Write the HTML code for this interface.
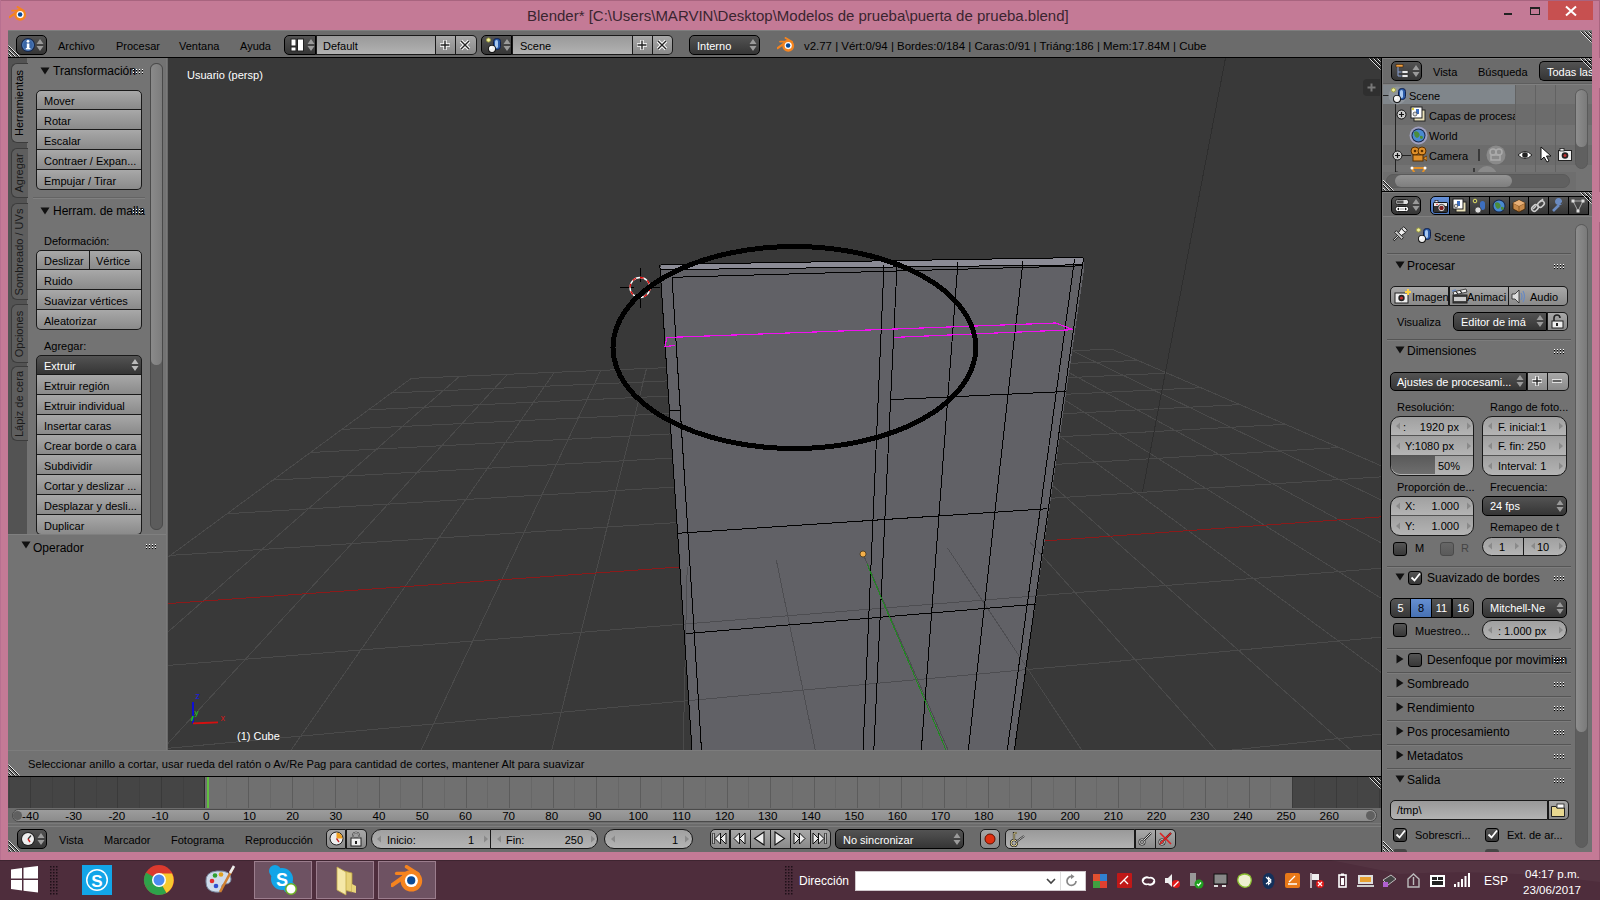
<!DOCTYPE html><html><head><meta charset="utf-8"><style>
html,body{margin:0;padding:0}body{width:1600px;height:900px;overflow:hidden;position:relative;background:#c47a96;font-family:"Liberation Sans",sans-serif}
.a{position:absolute;box-sizing:border-box}.t{white-space:nowrap}
</style></head><body>
<div class="a" style="left:0px;top:0px;width:1600px;height:1px;background:#a8647f"></div>
<div class="a" style="left:1599px;top:0px;width:1px;height:900px;background:#a8647f"></div>
<div class="a" style="left:0px;top:0px;width:1px;height:860px;background:#b87090"></div>
<div class="a t" style="left:527px;top:8.35px;font-size:15px;line-height:15px;color:#3a2530;">Blender* [C:\Users\MARVIN\Desktop\Modelos de prueba\puerta de prueba.blend]</div>
<div class="a" style="left:1548px;top:1px;width:45px;height:19px;background:#c75050"></div>
<svg class="a" style="left:1564px;top:5px;" width="14" height="12" viewBox="0 0 14 12"><path d="M2 1.5L12 10.5M12 1.5L2 10.5" stroke="#fff" stroke-width="2"/></svg>
<div class="a" style="left:1530px;top:7px;width:10px;height:8px;border:1px solid #222;border-top-width:2px"></div>
<div class="a" style="left:1504px;top:13px;width:8px;height:2px;background:#222"></div>
<div class="a" style="left:8px;top:30px;width:1584px;height:822px;background:#727272"></div>
<div class="a" style="left:8px;top:30px;width:1584px;height:27px;background:#6b6b6b"></div>
<div class="a" style="left:8px;top:30px;width:1584px;height:1px;background:#7e7e7e"></div>
<div class="a" style="left:8px;top:57px;width:1584px;height:1px;background:#000"></div>
<div class="a" style="left:16px;top:35px;width:31px;height:20px;border:1px solid #000000;border-radius:5px;background:linear-gradient(#535353,#353535);"></div>
<svg class="a" style="left:20px;top:37px;" width="16" height="16" viewBox="0 0 16 16"><circle cx="8" cy="8" r="7" fill="#16264a"/><circle cx="8" cy="8" r="6" fill="#4c79b6"/><circle cx="8" cy="8" r="4.8" fill="#3a66a6"/><rect x="6.8" y="6.5" width="2.6" height="5.5" fill="#fff"/><rect x="5.8" y="11" width="4.6" height="1.4" fill="#fff"/><circle cx="8" cy="4.3" r="1.4" fill="#fff"/></svg>
<svg class="a" style="left:36px;top:38px;" width="8" height="14" viewBox="0 0 8 14"><path d="M0.5 6L4 1L7.5 6Z M0.5 8L4 13L7.5 8Z" fill="#9a9a9a"/></svg>
<div class="a t" style="left:58px;top:41.35px;font-size:11px;line-height:11px;color:#000;">Archivo</div>
<div class="a t" style="left:116px;top:41.35px;font-size:11px;line-height:11px;color:#000;">Procesar</div>
<div class="a t" style="left:179px;top:41.35px;font-size:11px;line-height:11px;color:#000;">Ventana</div>
<div class="a t" style="left:240px;top:41.35px;font-size:11px;line-height:11px;color:#000;">Ayuda</div>
<div class="a" style="left:284px;top:35px;width:32px;height:20px;border:1px solid #000000;border-radius:5px 0 0 5px;background:linear-gradient(#535353,#353535)"></div>
<div class="a" style="left:316px;top:35px;width:120px;height:20px;border:1px solid #191919;border-left:none;border-radius:0;background:linear-gradient(#999999,#b2b2b2)"></div>
<div class="a" style="left:316px;top:35px;width:1px;height:20px;background:#191919"></div>
<div class="a" style="left:435px;top:35px;width:21px;height:20px;border:1px solid #191919;border-left:none;border-radius:0;background:linear-gradient(#a8a8a8,#8a8a8a)"></div>
<div class="a" style="left:435px;top:35px;width:1px;height:20px;background:#191919"></div>
<div class="a" style="left:455px;top:35px;width:22px;height:20px;border:1px solid #191919;border-left:none;border-radius:0 5px 5px 0;background:linear-gradient(#a8a8a8,#8a8a8a)"></div>
<div class="a" style="left:455px;top:35px;width:1px;height:20px;background:#191919"></div>
<svg class="a" style="left:290px;top:38px;" width="16" height="14" viewBox="0 0 16 14"><rect x="1" y="1" width="5" height="7" fill="#fff" stroke="#222" stroke-width="1"/><rect x="1" y="9" width="5" height="4" fill="#fff" stroke="#222"/><rect x="7.5" y="1" width="6" height="12" fill="#fff" stroke="#222"/></svg>
<svg class="a" style="left:307px;top:38px;" width="8" height="14" viewBox="0 0 8 14"><path d="M0.5 6L4 1L7.5 6Z M0.5 8L4 13L7.5 8Z" fill="#9a9a9a"/></svg>
<div class="a t" style="left:323px;top:41.35px;font-size:11px;line-height:11px;color:#000;">Default</div>
<svg class="a" style="left:438px;top:38px;" width="14" height="14" viewBox="0 0 14 14"><path d="M7 2V12M2 7H12" stroke="#fff" stroke-width="3.4"/><path d="M7 2.5V11.5M2.5 7H11.5" stroke="#222" stroke-width="1.4"/></svg>
<svg class="a" style="left:458px;top:38px;" width="14" height="14" viewBox="0 0 14 14"><path d="M3 3L11 11M11 3L3 11" stroke="#fff" stroke-width="3.4"/><path d="M3 3L11 11M11 3L3 11" stroke="#222" stroke-width="1.4"/></svg>
<div class="a" style="left:481px;top:35px;width:31px;height:20px;border:1px solid #000000;border-radius:5px 0 0 5px;background:linear-gradient(#535353,#353535)"></div>
<div class="a" style="left:512px;top:35px;width:121px;height:20px;border:1px solid #191919;border-left:none;border-radius:0;background:linear-gradient(#999999,#b2b2b2)"></div>
<div class="a" style="left:512px;top:35px;width:1px;height:20px;background:#191919"></div>
<div class="a" style="left:632px;top:35px;width:21px;height:20px;border:1px solid #191919;border-left:none;border-radius:0;background:linear-gradient(#a8a8a8,#8a8a8a)"></div>
<div class="a" style="left:632px;top:35px;width:1px;height:20px;background:#191919"></div>
<div class="a" style="left:652px;top:35px;width:21px;height:20px;border:1px solid #191919;border-left:none;border-radius:0 5px 5px 0;background:linear-gradient(#a8a8a8,#8a8a8a)"></div>
<div class="a" style="left:652px;top:35px;width:1px;height:20px;background:#191919"></div>
<svg class="a" style="left:485px;top:37px;" width="18" height="17" viewBox="0 0 18 17"><circle cx="3.5" cy="3" r="2" fill="#f0f0a0" stroke="#a0a040" stroke-width="1"/><rect x="8.5" y="1.5" width="7" height="11" rx="3" fill="#2a5aa8" stroke="#10204a" stroke-width="1"/><rect x="10" y="3" width="3" height="8" rx="1.5" fill="#a8c8f0"/><circle cx="7" cy="12" r="4" fill="#151515"/><circle cx="7" cy="11.8" r="3.1" fill="#f0f0f0"/><circle cx="6" cy="10.8" r="1.2" fill="#fff"/></svg>
<svg class="a" style="left:503px;top:38px;" width="8" height="14" viewBox="0 0 8 14"><path d="M0.5 6L4 1L7.5 6Z M0.5 8L4 13L7.5 8Z" fill="#9a9a9a"/></svg>
<div class="a t" style="left:520px;top:41.35px;font-size:11px;line-height:11px;color:#000;">Scene</div>
<svg class="a" style="left:635px;top:38px;" width="14" height="14" viewBox="0 0 14 14"><path d="M7 2V12M2 7H12" stroke="#fff" stroke-width="3.4"/><path d="M7 2.5V11.5M2.5 7H11.5" stroke="#222" stroke-width="1.4"/></svg>
<svg class="a" style="left:655px;top:38px;" width="14" height="14" viewBox="0 0 14 14"><path d="M3 3L11 11M11 3L3 11" stroke="#fff" stroke-width="3.4"/><path d="M3 3L11 11M11 3L3 11" stroke="#222" stroke-width="1.4"/></svg>
<div class="a" style="left:689px;top:35px;width:71px;height:20px;border:1px solid #000000;border-radius:5px;background:linear-gradient(#535353,#353535);"></div>
<div class="a t" style="left:697px;top:41.35px;font-size:11px;line-height:11px;color:#fff;">Interno</div>
<svg class="a" style="left:749px;top:38px;" width="8" height="14" viewBox="0 0 8 14"><path d="M0.5 6L4 1L7.5 6Z M0.5 8L4 13L7.5 8Z" fill="#9a9a9a"/></svg>
<svg class="a" style="left:777px;top:37px;" width="19" height="16" viewBox="0 0 19 16"><g transform="scale(0.55) translate(-6,-3)"><path d="M21.6 4.8L33 12" stroke="#f5841f" stroke-width="3.6" stroke-linecap="round"/><path d="M11.6 11.4H24" stroke="#f5841f" stroke-width="3.4" stroke-linecap="round"/><path d="M7.2 23.2L18 15.5" stroke="#f5841f" stroke-width="4" stroke-linecap="round"/><circle cx="26.4" cy="18.8" r="10.8" fill="#f5841f"/><circle cx="26.4" cy="18.6" r="6.5" fill="#fff"/><circle cx="26.2" cy="18.4" r="4.1" fill="#0a4a96"/></g></svg>
<div class="a t" style="left:804px;top:40.97px;font-size:11.45px;line-height:11.45px;color:#000;">v2.77 | Vért:0/94 | Bordes:0/184 | Caras:0/91 | Triáng:186 | Mem:17.84M | Cube</div>
<svg class="a" style="left:9px;top:6px;" width="19" height="16" viewBox="0 0 19 16"><g transform="scale(0.55) translate(-6,-3)"><path d="M21.6 4.8L33 12" stroke="#f5841f" stroke-width="3.6" stroke-linecap="round"/><path d="M11.6 11.4H24" stroke="#f5841f" stroke-width="3.4" stroke-linecap="round"/><path d="M7.2 23.2L18 15.5" stroke="#f5841f" stroke-width="4" stroke-linecap="round"/><circle cx="26.4" cy="18.8" r="10.8" fill="#f5841f"/><circle cx="26.4" cy="18.6" r="6.5" fill="#fff"/><circle cx="26.2" cy="18.4" r="4.1" fill="#0a4a96"/></g></svg>
<div class="a" style="left:8px;top:58px;width:159px;height:476px;background:#737373"></div>
<div class="a" style="left:8px;top:58px;width:19px;height:476px;background:#535353"></div>
<div class="a" style="left:11px;top:63px;width:17px;height:80px;background:#737373;border:1px solid #3c3c3c;border-right:none;border-radius:6px 0 0 6px"></div>
<div class="a t" style="left:-81px;top:97.0px;width:200px;height:12px;line-height:12px;text-align:center;font-size:11px;color:#000;transform:rotate(-90deg)">Herramientas</div>
<div class="a" style="left:11px;top:148px;width:17px;height:50px;background:#5e5e5e;border:1px solid #3c3c3c;border-right:none;border-radius:6px 0 0 6px"></div>
<div class="a t" style="left:-81px;top:167.0px;width:200px;height:12px;line-height:12px;text-align:center;font-size:11px;color:#1a1a1a;transform:rotate(-90deg)">Agregar</div>
<div class="a" style="left:11px;top:203px;width:17px;height:97px;background:#5e5e5e;border:1px solid #3c3c3c;border-right:none;border-radius:6px 0 0 6px"></div>
<div class="a t" style="left:-81px;top:245.5px;width:200px;height:12px;line-height:12px;text-align:center;font-size:11px;color:#1a1a1a;transform:rotate(-90deg)">Sombreado / UVs</div>
<div class="a" style="left:11px;top:304px;width:17px;height:59px;background:#5e5e5e;border:1px solid #3c3c3c;border-right:none;border-radius:6px 0 0 6px"></div>
<div class="a t" style="left:-81px;top:327.5px;width:200px;height:12px;line-height:12px;text-align:center;font-size:11px;color:#1a1a1a;transform:rotate(-90deg)">Opciones</div>
<div class="a" style="left:11px;top:366px;width:17px;height:75px;background:#5e5e5e;border:1px solid #3c3c3c;border-right:none;border-radius:6px 0 0 6px"></div>
<div class="a t" style="left:-81px;top:397.5px;width:200px;height:12px;line-height:12px;text-align:center;font-size:11px;color:#1a1a1a;transform:rotate(-90deg)">Lápiz de cera</div>
<div class="a" style="left:150px;top:63px;width:13px;height:467px;background:#5c5c5c;border-radius:6px;border:1px solid #4a4a4a"></div>
<div class="a" style="left:151px;top:64px;width:11px;height:301px;background:linear-gradient(90deg,#8a8a8a,#7c7c7c);border-radius:6px"></div>
<svg class="a" style="left:40px;top:67px;" width="10" height="8" viewBox="0 0 10 8"><path d="M0.5 0.5H9.5L5 7.5Z" fill="#111"/></svg>
<div class="a t" style="left:53px;top:64.50px;font-size:12px;line-height:12px;color:#000;">Transformación</div>
<svg class="a" style="left:132px;top:68px;" width="12" height="6" viewBox="0 0 12 6"><rect x="1" y="1" width="1" height="1" fill="#fff"/><rect x="1" y="2" width="1" height="1" fill="#000"/><rect x="1" y="4" width="1" height="1" fill="#fff"/><rect x="1" y="5" width="1" height="1" fill="#000"/><rect x="4" y="1" width="1" height="1" fill="#fff"/><rect x="4" y="2" width="1" height="1" fill="#000"/><rect x="4" y="4" width="1" height="1" fill="#fff"/><rect x="4" y="5" width="1" height="1" fill="#000"/><rect x="7" y="1" width="1" height="1" fill="#fff"/><rect x="7" y="2" width="1" height="1" fill="#000"/><rect x="7" y="4" width="1" height="1" fill="#fff"/><rect x="7" y="5" width="1" height="1" fill="#000"/><rect x="10" y="1" width="1" height="1" fill="#fff"/><rect x="10" y="2" width="1" height="1" fill="#000"/><rect x="10" y="4" width="1" height="1" fill="#fff"/><rect x="10" y="5" width="1" height="1" fill="#000"/></svg>
<div class="a" style="left:36px;top:90px;width:106px;height:20px;border:1px solid #191919;border-radius:5px 5px 0 0;background:linear-gradient(#a8a8a8,#8a8a8a)"></div>
<div class="a" style="left:36px;top:110px;width:106px;height:20px;border:1px solid #191919;border-top:none;border-radius:0;background:linear-gradient(#a8a8a8,#8a8a8a)"></div>
<div class="a" style="left:36px;top:109px;width:106px;height:1px;background:#191919"></div>
<div class="a" style="left:36px;top:130px;width:106px;height:20px;border:1px solid #191919;border-top:none;border-radius:0;background:linear-gradient(#a8a8a8,#8a8a8a)"></div>
<div class="a" style="left:36px;top:129px;width:106px;height:1px;background:#191919"></div>
<div class="a" style="left:36px;top:150px;width:106px;height:20px;border:1px solid #191919;border-top:none;border-radius:0;background:linear-gradient(#a8a8a8,#8a8a8a)"></div>
<div class="a" style="left:36px;top:149px;width:106px;height:1px;background:#191919"></div>
<div class="a" style="left:36px;top:170px;width:106px;height:20px;border:1px solid #191919;border-top:none;border-radius:0 0 5px 5px;background:linear-gradient(#a8a8a8,#8a8a8a)"></div>
<div class="a" style="left:36px;top:169px;width:106px;height:1px;background:#191919"></div>
<div class="a t" style="left:44px;top:96.35px;font-size:11px;line-height:11px;color:#000;">Mover</div>
<div class="a t" style="left:44px;top:116.35px;font-size:11px;line-height:11px;color:#000;">Rotar</div>
<div class="a t" style="left:44px;top:136.35px;font-size:11px;line-height:11px;color:#000;">Escalar</div>
<div class="a t" style="left:44px;top:156.35px;font-size:11px;line-height:11px;color:#000;">Contraer / Expan...</div>
<div class="a t" style="left:44px;top:176.35px;font-size:11px;line-height:11px;color:#000;">Empujar / Tirar</div>
<div class="a" style="left:33px;top:197px;width:112px;height:1px;background:#646464"></div>
<div class="a" style="left:33px;top:198px;width:112px;height:1px;background:#808080"></div>
<svg class="a" style="left:40px;top:207px;" width="10" height="8" viewBox="0 0 10 8"><path d="M0.5 0.5H9.5L5 7.5Z" fill="#111"/></svg>
<div class="a t" style="left:53px;top:204.50px;font-size:12px;line-height:12px;color:#000;">Herram. de malla</div>
<svg class="a" style="left:132px;top:208px;" width="12" height="6" viewBox="0 0 12 6"><rect x="1" y="1" width="1" height="1" fill="#fff"/><rect x="1" y="2" width="1" height="1" fill="#000"/><rect x="1" y="4" width="1" height="1" fill="#fff"/><rect x="1" y="5" width="1" height="1" fill="#000"/><rect x="4" y="1" width="1" height="1" fill="#fff"/><rect x="4" y="2" width="1" height="1" fill="#000"/><rect x="4" y="4" width="1" height="1" fill="#fff"/><rect x="4" y="5" width="1" height="1" fill="#000"/><rect x="7" y="1" width="1" height="1" fill="#fff"/><rect x="7" y="2" width="1" height="1" fill="#000"/><rect x="7" y="4" width="1" height="1" fill="#fff"/><rect x="7" y="5" width="1" height="1" fill="#000"/><rect x="10" y="1" width="1" height="1" fill="#fff"/><rect x="10" y="2" width="1" height="1" fill="#000"/><rect x="10" y="4" width="1" height="1" fill="#fff"/><rect x="10" y="5" width="1" height="1" fill="#000"/></svg>
<div class="a t" style="left:44px;top:236.35px;font-size:11px;line-height:11px;color:#000;">Deformación:</div>
<div class="a" style="left:36px;top:250px;width:106px;height:20px;border:1px solid #191919;border-radius:5px 5px 0 0;background:linear-gradient(#a8a8a8,#8a8a8a)"></div>
<div class="a" style="left:36px;top:270px;width:106px;height:20px;border:1px solid #191919;border-top:none;border-radius:0;background:linear-gradient(#a8a8a8,#8a8a8a)"></div>
<div class="a" style="left:36px;top:269px;width:106px;height:1px;background:#191919"></div>
<div class="a" style="left:36px;top:290px;width:106px;height:20px;border:1px solid #191919;border-top:none;border-radius:0;background:linear-gradient(#a8a8a8,#8a8a8a)"></div>
<div class="a" style="left:36px;top:289px;width:106px;height:1px;background:#191919"></div>
<div class="a" style="left:36px;top:310px;width:106px;height:20px;border:1px solid #191919;border-top:none;border-radius:0 0 5px 5px;background:linear-gradient(#a8a8a8,#8a8a8a)"></div>
<div class="a" style="left:36px;top:309px;width:106px;height:1px;background:#191919"></div>
<div class="a" style="left:89px;top:250px;width:1px;height:20px;background:#191919"></div>
<div class="a t" style="left:44px;top:256.35px;font-size:11px;line-height:11px;color:#000;">Deslizar</div>
<div class="a t" style="left:96px;top:256.35px;font-size:11px;line-height:11px;color:#000;">Vértice</div>
<div class="a t" style="left:44px;top:276.35px;font-size:11px;line-height:11px;color:#000;">Ruido</div>
<div class="a t" style="left:44px;top:296.35px;font-size:11px;line-height:11px;color:#000;">Suavizar vértices</div>
<div class="a t" style="left:44px;top:316.35px;font-size:11px;line-height:11px;color:#000;">Aleatorizar</div>
<div class="a t" style="left:44px;top:341.35px;font-size:11px;line-height:11px;color:#000;">Agregar:</div>
<div class="a" style="left:36px;top:355px;width:106px;height:20px;border:1px solid #191919;border-radius:5px 5px 0 0;background:linear-gradient(#535353,#353535)"></div>
<div class="a" style="left:36px;top:375px;width:106px;height:20px;border:1px solid #191919;border-top:none;border-radius:0;background:linear-gradient(#a8a8a8,#8a8a8a)"></div>
<div class="a" style="left:36px;top:374px;width:106px;height:1px;background:#191919"></div>
<div class="a" style="left:36px;top:395px;width:106px;height:20px;border:1px solid #191919;border-top:none;border-radius:0;background:linear-gradient(#a8a8a8,#8a8a8a)"></div>
<div class="a" style="left:36px;top:394px;width:106px;height:1px;background:#191919"></div>
<div class="a" style="left:36px;top:415px;width:106px;height:20px;border:1px solid #191919;border-top:none;border-radius:0;background:linear-gradient(#a8a8a8,#8a8a8a)"></div>
<div class="a" style="left:36px;top:414px;width:106px;height:1px;background:#191919"></div>
<div class="a" style="left:36px;top:435px;width:106px;height:20px;border:1px solid #191919;border-top:none;border-radius:0;background:linear-gradient(#a8a8a8,#8a8a8a)"></div>
<div class="a" style="left:36px;top:434px;width:106px;height:1px;background:#191919"></div>
<div class="a" style="left:36px;top:455px;width:106px;height:20px;border:1px solid #191919;border-top:none;border-radius:0;background:linear-gradient(#a8a8a8,#8a8a8a)"></div>
<div class="a" style="left:36px;top:454px;width:106px;height:1px;background:#191919"></div>
<div class="a" style="left:36px;top:475px;width:106px;height:20px;border:1px solid #191919;border-top:none;border-radius:0;background:linear-gradient(#a8a8a8,#8a8a8a)"></div>
<div class="a" style="left:36px;top:474px;width:106px;height:1px;background:#191919"></div>
<div class="a" style="left:36px;top:495px;width:106px;height:20px;border:1px solid #191919;border-top:none;border-radius:0;background:linear-gradient(#a8a8a8,#8a8a8a)"></div>
<div class="a" style="left:36px;top:494px;width:106px;height:1px;background:#191919"></div>
<div class="a" style="left:36px;top:515px;width:106px;height:20px;border:1px solid #191919;border-top:none;border-radius:0 0 5px 5px;background:linear-gradient(#a8a8a8,#8a8a8a)"></div>
<div class="a" style="left:36px;top:514px;width:106px;height:1px;background:#191919"></div>
<svg class="a" style="left:131px;top:358px;" width="8" height="14" viewBox="0 0 8 14"><path d="M0.5 6L4 1L7.5 6Z M0.5 8L4 13L7.5 8Z" fill="#bbb"/></svg>
<div class="a t" style="left:44px;top:361.35px;font-size:11px;line-height:11px;color:#fff;">Extruir</div>
<div class="a t" style="left:44px;top:381.35px;font-size:11px;line-height:11px;color:#000;">Extruir región</div>
<div class="a t" style="left:44px;top:401.35px;font-size:11px;line-height:11px;color:#000;">Extruir individual</div>
<div class="a t" style="left:44px;top:421.35px;font-size:11px;line-height:11px;color:#000;">Insertar caras</div>
<div class="a t" style="left:44px;top:441.35px;font-size:11px;line-height:11px;color:#000;">Crear borde o cara</div>
<div class="a t" style="left:44px;top:461.35px;font-size:11px;line-height:11px;color:#000;">Subdividir</div>
<div class="a t" style="left:44px;top:481.35px;font-size:11px;line-height:11px;color:#000;">Cortar y deslizar ...</div>
<div class="a t" style="left:44px;top:501.35px;font-size:11px;line-height:11px;color:#000;">Desplazar y desli...</div>
<div class="a t" style="left:44px;top:521.35px;font-size:11px;line-height:11px;color:#000;">Duplicar</div>
<div class="a" style="left:8px;top:534px;width:159px;height:216px;background:#737373"></div>
<div class="a" style="left:8px;top:534px;width:159px;height:1px;background:#7f7f7f"></div>
<svg class="a" style="left:21px;top:541px;" width="10" height="8" viewBox="0 0 10 8"><path d="M0.5 0.5H9.5L5 7.5Z" fill="#111"/></svg>
<div class="a t" style="left:33px;top:541.50px;font-size:12px;line-height:12px;color:#000;">Operador</div>
<svg class="a" style="left:145px;top:543px;" width="12" height="6" viewBox="0 0 12 6"><rect x="1" y="1" width="1" height="1" fill="#fff"/><rect x="1" y="2" width="1" height="1" fill="#000"/><rect x="1" y="4" width="1" height="1" fill="#fff"/><rect x="1" y="5" width="1" height="1" fill="#000"/><rect x="4" y="1" width="1" height="1" fill="#fff"/><rect x="4" y="2" width="1" height="1" fill="#000"/><rect x="4" y="4" width="1" height="1" fill="#fff"/><rect x="4" y="5" width="1" height="1" fill="#000"/><rect x="7" y="1" width="1" height="1" fill="#fff"/><rect x="7" y="2" width="1" height="1" fill="#000"/><rect x="7" y="4" width="1" height="1" fill="#fff"/><rect x="7" y="5" width="1" height="1" fill="#000"/><rect x="10" y="1" width="1" height="1" fill="#fff"/><rect x="10" y="2" width="1" height="1" fill="#000"/><rect x="10" y="4" width="1" height="1" fill="#fff"/><rect x="10" y="5" width="1" height="1" fill="#000"/></svg>
<svg class="a" style="left:168px;top:58px;shape-rendering:crispEdges" width="1213" height="692" viewBox="0 0 1213 692"><rect width="1213" height="692" fill="#393939"/><path d="M-17311.4 13218.3L243.4 320.3 M9494.2 12895.3L7772.1 3247.8 M-14386.0 13183.0L291.7 318.2 M-15892.3 12175.6L4102.4 1658.8 M-11460.6 13147.8L339.4 316.3 M-2908.0 2635.7L2900.6 1138.4 M-8535.1 13112.5L386.4 314.3 M-1390.7 1520.9L2303.6 879.9 M-5609.7 13077.3L432.8 312.4 M-803.0 1089.1L1946.6 725.3 M-2684.2 13042.0L478.5 310.5 M-490.9 859.7L1709.1 622.5 M241.2 13006.8L523.7 308.6 M-297.3 717.5L1539.8 549.2 M3166.6 12971.5L568.2 306.7 M-165.6 620.7L1412.9 494.2 M6092.1 12936.3L612.1 304.9 M-70.1 550.6L1314.3 451.6 M9017.5 12901.0L655.5 303.1 M2.3 497.4L1235.5 417.4 M8877.5 9440.6L698.3 301.3 M59.0 455.7L1171.0 389.5 M8469.5 7154.9L740.5 299.6 M104.7 422.1L1117.3 366.3 M8221.0 5762.6L782.2 297.8 M142.3 394.5L1071.9 346.6 M8053.7 4825.6L823.4 296.1 M173.8 371.4L1033.0 329.7 M7933.5 4151.9L864.0 294.4 M200.5 351.8L999.3 315.1 M7842.8 3644.1L904.1 292.7 M223.4 334.9L969.8 302.4 M7772.1 3247.8L943.7 291.1 M243.4 320.3L943.7 291.1" stroke="#4a4a4a" stroke-width="1" fill="none" /><path d="M-70.1 550.6L1314.3 451.6" stroke="#8c1a1a" stroke-width="1" fill="none"/><path d="M1057.5,0.0 L974.5,434.0" stroke="#2e2e2e" stroke-width="1" fill="none"/><polygon points="493.0,206.5 915.5,199.5 916.5,208.0 846.4,692.0 524.0,692.0 491.8,212.5" fill="#616166"/><polygon points="493.0,206.5 915.5,199.5 914.8,206.8 492.0,211.7" fill="#8b8b95"/><defs><clipPath id="mc"><polygon points="493.0,206.5 915.5,199.5 916.5,208.0 846.4,692.0 524.0,692.0 491.8,212.5"/></clipPath></defs><g clip-path="url(#mc)"><path d="M-17311.4 13218.3L-70.9 551.2 M9494.2 12895.3L7772.1 3247.8 M-14386.0 13183.0L34.6 543.6 M-15892.3 12175.6L4102.4 1658.8 M-11460.6 13147.8L137.0 536.3 M-2908.0 2635.7L2900.6 1138.4 M-8535.1 13112.5L236.6 529.2 M-1390.7 1520.9L2303.6 879.9 M-5609.7 13077.3L333.4 522.2 M-803.0 1089.1L1946.6 725.3 M-2684.2 13042.0L427.6 515.5 M-490.9 859.7L1709.1 622.5 M241.2 13006.8L519.2 508.9 M-297.3 717.5L1539.8 549.2 M3166.6 12971.5L608.4 502.5 M-165.6 620.7L1412.9 494.2 M6092.1 12936.3L695.2 496.3 M9017.5 12901.0L779.7 490.3 M8877.5 9440.6L862.1 484.4 M8469.5 7154.9L942.4 478.6 M8221.0 5762.6L1020.7 473.0 M8053.7 4825.6L1097.1 467.6 M7933.5 4151.9L1171.5 462.2 M7842.8 3644.1L1244.2 457.0 M7772.1 3247.8L1315.2 451.9" stroke="rgba(40,40,44,0.35)" stroke-width="1" fill="none" /></g><path d="M493.0,206.5L915.5,199.5 M492.0,211.7L914.8,206.8 M504.0,219.3L914.0,207.8 M491.8,207.0L524.0,692.0 M504.0,219.0L533.5,692.0 M716.0,207.0L695.0,692.0 M729.0,208.0L705.8,692.0 M790.0,204.0L753.3,692.0 M855.0,203.0L800.3,692.0 M906.5,201.5L839.3,692.0 M915.5,200.3L846.4,692.0 M721.6,341.7L897.6,333.5 M501.6,352.4L511.8,352.4 M509.9,475.3L879.4,450.7 M518.3,575.6L867.6,546.2" stroke="#000" stroke-width="1" fill="none"/><path d="M699.0,506.0L795.0,732.0" stroke="#1e8a1e" stroke-width="1" fill="none"/><polyline points="507.0,287.5 497.0,288.6 499.0,279.5 888.0,265.0 905.0,271.7 726.0,279.4" stroke="#f010f0" stroke-width="1.2" fill="none"/><circle cx="695" cy="496" r="3" fill="#f5b04a" stroke="#3a2a10" stroke-width="0.7" shape-rendering="geometricPrecision"/><path d="M472 209.5V223.5M472 235.5V249.5M452 229.5H466M478 229.5H492" stroke="#000" stroke-width="1"/><circle cx="472" cy="229.5" r="10" fill="none" stroke="#fff" stroke-width="1.3" shape-rendering="geometricPrecision"/><circle cx="472" cy="229.5" r="10" fill="none" stroke="#e00000" stroke-width="1.3" stroke-dasharray="3.9 3.9" shape-rendering="geometricPrecision"/><ellipse cx="626.4" cy="289.5" rx="181.4" ry="101" fill="none" stroke="#000" stroke-width="5"/></svg>
<div class="a" style="left:166px;top:58px;width:1px;height:692px;background:#7a7a7a"></div>
<div class="a" style="left:167px;top:58px;width:1px;height:692px;background:#6a6a6a"></div>
<div class="a t" style="left:187px;top:70.35px;font-size:11px;line-height:11px;color:#fff;">Usuario (persp)</div>
<div class="a t" style="left:237px;top:731.35px;font-size:11px;line-height:11px;color:#fff;">(1) Cube</div>
<svg class="a" style="left:180px;top:686px;" width="50" height="42" viewBox="0 0 50 42"><path d="M13 37.5V16" stroke="#0a0ae6" stroke-width="1.8"/><path d="M13 37.3L23 37L38 36.3" stroke="#d41010" stroke-width="1.8"/><path d="M11.5 35L13 30" stroke="#18c818" stroke-width="1.6"/><text x="15.5" y="12.5" font-size="9" fill="#1a1ae8" font-family="Liberation Sans">z</text><text x="40.5" y="35" font-size="9" fill="#d01818" font-family="Liberation Sans">x</text><text x="14.5" y="28.5" font-size="8" fill="#20d020" font-family="Liberation Sans">y</text></svg>
<div class="a" style="left:1363px;top:79px;width:17px;height:17px;background:#2f2f2f;border-radius:4px 0 0 4px"></div>
<svg class="a" style="left:1366px;top:82px;" width="11" height="11" viewBox="0 0 11 11"><path d="M5.5 1.5V9.5M1.5 5.5H9.5" stroke="#777" stroke-width="2"/></svg>
<div class="a" style="left:8px;top:750px;width:1373px;height:26px;background:#727272"></div>
<div class="a" style="left:8px;top:750px;width:1373px;height:1px;background:#7c7c7c"></div>
<div class="a" style="left:8px;top:776px;width:1373px;height:1px;background:#000"></div>
<div class="a t" style="left:28px;top:758.72px;font-size:11.15px;line-height:11.15px;color:#000;">Seleccionar anillo a cortar, usar rueda del ratón o Av/Re Pag para cantidad de cortes, mantener Alt para suavizar</div>
<div class="a" style="left:8px;top:777px;width:1373px;height:31px;background:#454545"></div>
<div class="a" style="left:205px;top:777px;width:1088px;height:31px;background:#707070"></div>
<svg class="a" style="left:8px;top:777px;" width="1373" height="31" viewBox="0 0 1373 31"><rect x="1" y="0" width="1" height="31" fill="#404040"/><rect x="22" y="0" width="1" height="31" fill="#3a3a3a"/><rect x="44" y="0" width="1" height="31" fill="#404040"/><rect x="66" y="0" width="1" height="31" fill="#3a3a3a"/><rect x="88" y="0" width="1" height="31" fill="#404040"/><rect x="109" y="0" width="1" height="31" fill="#3a3a3a"/><rect x="131" y="0" width="1" height="31" fill="#404040"/><rect x="153" y="0" width="1" height="31" fill="#3a3a3a"/><rect x="175" y="0" width="1" height="31" fill="#404040"/><rect x="196" y="0" width="1" height="31" fill="#3a3a3a"/><rect x="218" y="0" width="1" height="31" fill="#676767"/><rect x="240" y="0" width="1" height="31" fill="#5c5c5c"/><rect x="262" y="0" width="1" height="31" fill="#676767"/><rect x="284" y="0" width="1" height="31" fill="#5c5c5c"/><rect x="305" y="0" width="1" height="31" fill="#676767"/><rect x="327" y="0" width="1" height="31" fill="#5c5c5c"/><rect x="349" y="0" width="1" height="31" fill="#676767"/><rect x="371" y="0" width="1" height="31" fill="#5c5c5c"/><rect x="392" y="0" width="1" height="31" fill="#676767"/><rect x="414" y="0" width="1" height="31" fill="#5c5c5c"/><rect x="436" y="0" width="1" height="31" fill="#676767"/><rect x="458" y="0" width="1" height="31" fill="#5c5c5c"/><rect x="479" y="0" width="1" height="31" fill="#676767"/><rect x="501" y="0" width="1" height="31" fill="#5c5c5c"/><rect x="523" y="0" width="1" height="31" fill="#676767"/><rect x="545" y="0" width="1" height="31" fill="#5c5c5c"/><rect x="566" y="0" width="1" height="31" fill="#676767"/><rect x="588" y="0" width="1" height="31" fill="#5c5c5c"/><rect x="610" y="0" width="1" height="31" fill="#676767"/><rect x="632" y="0" width="1" height="31" fill="#5c5c5c"/><rect x="653" y="0" width="1" height="31" fill="#676767"/><rect x="675" y="0" width="1" height="31" fill="#5c5c5c"/><rect x="697" y="0" width="1" height="31" fill="#676767"/><rect x="719" y="0" width="1" height="31" fill="#5c5c5c"/><rect x="740" y="0" width="1" height="31" fill="#676767"/><rect x="762" y="0" width="1" height="31" fill="#5c5c5c"/><rect x="784" y="0" width="1" height="31" fill="#676767"/><rect x="806" y="0" width="1" height="31" fill="#5c5c5c"/><rect x="827" y="0" width="1" height="31" fill="#676767"/><rect x="849" y="0" width="1" height="31" fill="#5c5c5c"/><rect x="871" y="0" width="1" height="31" fill="#676767"/><rect x="893" y="0" width="1" height="31" fill="#5c5c5c"/><rect x="914" y="0" width="1" height="31" fill="#676767"/><rect x="936" y="0" width="1" height="31" fill="#5c5c5c"/><rect x="958" y="0" width="1" height="31" fill="#676767"/><rect x="980" y="0" width="1" height="31" fill="#5c5c5c"/><rect x="1001" y="0" width="1" height="31" fill="#676767"/><rect x="1023" y="0" width="1" height="31" fill="#5c5c5c"/><rect x="1045" y="0" width="1" height="31" fill="#676767"/><rect x="1067" y="0" width="1" height="31" fill="#5c5c5c"/><rect x="1088" y="0" width="1" height="31" fill="#676767"/><rect x="1110" y="0" width="1" height="31" fill="#5c5c5c"/><rect x="1132" y="0" width="1" height="31" fill="#676767"/><rect x="1154" y="0" width="1" height="31" fill="#5c5c5c"/><rect x="1175" y="0" width="1" height="31" fill="#676767"/><rect x="1197" y="0" width="1" height="31" fill="#5c5c5c"/><rect x="1219" y="0" width="1" height="31" fill="#676767"/><rect x="1241" y="0" width="1" height="31" fill="#5c5c5c"/><rect x="1262" y="0" width="1" height="31" fill="#676767"/><rect x="1284" y="0" width="1" height="31" fill="#3a3a3a"/><rect x="1306" y="0" width="1" height="31" fill="#404040"/><rect x="1328" y="0" width="1" height="31" fill="#3a3a3a"/><rect x="1349" y="0" width="1" height="31" fill="#404040"/><rect x="1371" y="0" width="1" height="31" fill="#3a3a3a"/></svg>
<div class="a" style="left:204px;top:777px;width:1px;height:31px;background:#2a2a2a"></div>
<div class="a" style="left:207px;top:777px;width:2px;height:31px;background:#60c040"></div>
<div class="a" style="left:8px;top:808px;width:1373px;height:18px;background:#6c6c6c"></div>
<div class="a" style="left:8px;top:823px;width:1373px;height:1px;background:#7a7a7a"></div>
<div class="a" style="left:12px;top:809px;width:1365px;height:13px;border:1px solid #4a4a4a;border-radius:7px;background:linear-gradient(#9c9c9c,#8c8c8c)"></div>
<div class="a" style="left:13px;top:811px;width:9px;height:9px;border-radius:5px;background:#606060"></div>
<div class="a" style="left:1366px;top:811px;width:9px;height:9px;border-radius:5px;background:#606060"></div>
<div class="a t" style="left:-119.52600000000001px;width:300px;text-align:center;top:810.34px;font-size:11.6px;line-height:11.6px;color:#000;">-40</div>
<div class="a t" style="left:-76.332px;width:300px;text-align:center;top:810.34px;font-size:11.6px;line-height:11.6px;color:#000;">-30</div>
<div class="a t" style="left:-33.138000000000005px;width:300px;text-align:center;top:810.34px;font-size:11.6px;line-height:11.6px;color:#000;">-20</div>
<div class="a t" style="left:10.055999999999983px;width:300px;text-align:center;top:810.34px;font-size:11.6px;line-height:11.6px;color:#000;">-10</div>
<div class="a t" style="left:56.25px;width:300px;text-align:center;top:810.34px;font-size:11.6px;line-height:11.6px;color:#000;">0</div>
<div class="a t" style="left:99.44400000000002px;width:300px;text-align:center;top:810.34px;font-size:11.6px;line-height:11.6px;color:#000;">10</div>
<div class="a t" style="left:142.63800000000003px;width:300px;text-align:center;top:810.34px;font-size:11.6px;line-height:11.6px;color:#000;">20</div>
<div class="a t" style="left:185.832px;width:300px;text-align:center;top:810.34px;font-size:11.6px;line-height:11.6px;color:#000;">30</div>
<div class="a t" style="left:229.026px;width:300px;text-align:center;top:810.34px;font-size:11.6px;line-height:11.6px;color:#000;">40</div>
<div class="a t" style="left:272.22px;width:300px;text-align:center;top:810.34px;font-size:11.6px;line-height:11.6px;color:#000;">50</div>
<div class="a t" style="left:315.414px;width:300px;text-align:center;top:810.34px;font-size:11.6px;line-height:11.6px;color:#000;">60</div>
<div class="a t" style="left:358.608px;width:300px;text-align:center;top:810.34px;font-size:11.6px;line-height:11.6px;color:#000;">70</div>
<div class="a t" style="left:401.802px;width:300px;text-align:center;top:810.34px;font-size:11.6px;line-height:11.6px;color:#000;">80</div>
<div class="a t" style="left:444.996px;width:300px;text-align:center;top:810.34px;font-size:11.6px;line-height:11.6px;color:#000;">90</div>
<div class="a t" style="left:488.19000000000005px;width:300px;text-align:center;top:810.34px;font-size:11.6px;line-height:11.6px;color:#000;">100</div>
<div class="a t" style="left:531.384px;width:300px;text-align:center;top:810.34px;font-size:11.6px;line-height:11.6px;color:#000;">110</div>
<div class="a t" style="left:574.578px;width:300px;text-align:center;top:810.34px;font-size:11.6px;line-height:11.6px;color:#000;">120</div>
<div class="a t" style="left:617.7719999999999px;width:300px;text-align:center;top:810.34px;font-size:11.6px;line-height:11.6px;color:#000;">130</div>
<div class="a t" style="left:660.966px;width:300px;text-align:center;top:810.34px;font-size:11.6px;line-height:11.6px;color:#000;">140</div>
<div class="a t" style="left:704.16px;width:300px;text-align:center;top:810.34px;font-size:11.6px;line-height:11.6px;color:#000;">150</div>
<div class="a t" style="left:747.354px;width:300px;text-align:center;top:810.34px;font-size:11.6px;line-height:11.6px;color:#000;">160</div>
<div class="a t" style="left:790.548px;width:300px;text-align:center;top:810.34px;font-size:11.6px;line-height:11.6px;color:#000;">170</div>
<div class="a t" style="left:833.742px;width:300px;text-align:center;top:810.34px;font-size:11.6px;line-height:11.6px;color:#000;">180</div>
<div class="a t" style="left:876.9360000000001px;width:300px;text-align:center;top:810.34px;font-size:11.6px;line-height:11.6px;color:#000;">190</div>
<div class="a t" style="left:920.1300000000001px;width:300px;text-align:center;top:810.34px;font-size:11.6px;line-height:11.6px;color:#000;">200</div>
<div class="a t" style="left:963.3240000000001px;width:300px;text-align:center;top:810.34px;font-size:11.6px;line-height:11.6px;color:#000;">210</div>
<div class="a t" style="left:1006.518px;width:300px;text-align:center;top:810.34px;font-size:11.6px;line-height:11.6px;color:#000;">220</div>
<div class="a t" style="left:1049.712px;width:300px;text-align:center;top:810.34px;font-size:11.6px;line-height:11.6px;color:#000;">230</div>
<div class="a t" style="left:1092.906px;width:300px;text-align:center;top:810.34px;font-size:11.6px;line-height:11.6px;color:#000;">240</div>
<div class="a t" style="left:1136.1px;width:300px;text-align:center;top:810.34px;font-size:11.6px;line-height:11.6px;color:#000;">250</div>
<div class="a t" style="left:1179.2939999999999px;width:300px;text-align:center;top:810.34px;font-size:11.6px;line-height:11.6px;color:#000;">260</div>
<div class="a" style="left:8px;top:826px;width:1373px;height:26px;background:#6b6b6b"></div>
<div class="a" style="left:8px;top:826px;width:1373px;height:1px;background:#7e7e7e"></div>
<div class="a" style="left:17px;top:829px;width:30px;height:20px;border:1px solid #000000;border-radius:5px;background:linear-gradient(#535353,#353535);"></div>
<svg class="a" style="left:20px;top:831px;" width="16" height="16" viewBox="0 0 16 16"><circle cx="8" cy="8" r="7" fill="#222"/><circle cx="8" cy="8" r="6" fill="#eee"/><path d="M8 8L11 4.5" stroke="#333" stroke-width="1.2"/><path d="M8 8L10 11" stroke="#d02020" stroke-width="1.4"/></svg>
<svg class="a" style="left:37px;top:832px;" width="8" height="14" viewBox="0 0 8 14"><path d="M0.5 6L4 1L7.5 6Z M0.5 8L4 13L7.5 8Z" fill="#9a9a9a"/></svg>
<div class="a t" style="left:59px;top:835.35px;font-size:11px;line-height:11px;color:#000;">Vista</div>
<div class="a t" style="left:104px;top:835.35px;font-size:11px;line-height:11px;color:#000;">Marcador</div>
<div class="a t" style="left:171px;top:835.35px;font-size:11px;line-height:11px;color:#000;">Fotograma</div>
<div class="a t" style="left:245px;top:835.35px;font-size:11px;line-height:11px;color:#000;">Reproducción</div>
<div class="a" style="left:326px;top:829px;width:20px;height:20px;border:1px solid #191919;border-radius:5px 0 0 5px;background:linear-gradient(#a8a8a8,#8a8a8a)"></div>
<div class="a" style="left:346px;top:829px;width:21px;height:20px;border:1px solid #191919;border-left:none;border-radius:0 5px 5px 0;background:linear-gradient(#a8a8a8,#8a8a8a)"></div>
<div class="a" style="left:346px;top:829px;width:1px;height:20px;background:#191919"></div>
<svg class="a" style="left:329px;top:831px;" width="15" height="15" viewBox="0 0 15 15"><circle cx="7.5" cy="7.5" r="6.5" fill="#eee" stroke="#222"/><path d="M7.5 7.5V1.5A6 6 0 0 1 13.5 7.5Z" fill="#f0a020"/><path d="M7.5 7.5L10 11" stroke="#c02020" stroke-width="1.3"/></svg>
<svg class="a" style="left:349px;top:831px;" width="14" height="16" viewBox="0 0 14 16"><rect x="2" y="7" width="10" height="8" fill="#eee" stroke="#222"/><path d="M4 7V4.5A3 3 0 0 1 10 4.5V7" fill="none" stroke="#222" stroke-width="1.6"/><path d="M4 7V4.5A3 3 0 0 1 10 4.5V7" fill="none" stroke="#eee" stroke-width="0.7"/><rect x="6" y="10" width="2" height="3" fill="#222"/></svg>
<div class="a" style="left:371px;top:829px;width:120px;height:20px;border:1px solid #191919;border-radius:10px 0 0 10px;background:linear-gradient(#a0a0a0,#b4b4b4)"></div>
<div class="a" style="left:490px;top:829px;width:108px;height:20px;border:1px solid #191919;border-radius:0 10px 10px 0;background:linear-gradient(#a0a0a0,#b4b4b4)"></div>
<svg class="a" style="left:376px;top:834px;" width="6" height="10" viewBox="0 0 6 10"><path d="M5 1.5L1 5L5 8.5Z" fill="#8a8a8a"/></svg>
<svg class="a" style="left:483px;top:834px;" width="6" height="10" viewBox="0 0 6 10"><path d="M1 1.5L5 5L1 8.5Z" fill="#8a8a8a"/></svg>
<svg class="a" style="left:496px;top:834px;" width="6" height="10" viewBox="0 0 6 10"><path d="M5 1.5L1 5L5 8.5Z" fill="#8a8a8a"/></svg>
<svg class="a" style="left:590px;top:834px;" width="6" height="10" viewBox="0 0 6 10"><path d="M1 1.5L5 5L1 8.5Z" fill="#8a8a8a"/></svg>
<div class="a t" style="left:387px;top:835.35px;font-size:11px;line-height:11px;color:#000;">Inicio:</div>
<div class="a t" style="right:1126px;top:835.35px;font-size:11px;line-height:11px;color:#000;">1</div>
<div class="a t" style="left:506px;top:835.35px;font-size:11px;line-height:11px;color:#000;">Fin:</div>
<div class="a t" style="right:1017px;top:835.35px;font-size:11px;line-height:11px;color:#000;">250</div>
<div class="a" style="left:604px;top:829px;width:89px;height:20px;border:1px solid #191919;border-radius:10.0px;background:linear-gradient(#a0a0a0,#b4b4b4)"></div>
<svg class="a" style="left:610px;top:834px;" width="6" height="10" viewBox="0 0 6 10"><path d="M5 1.5L1 5L5 8.5Z" fill="#8a8a8a"/></svg>
<svg class="a" style="left:684px;top:834px;" width="6" height="10" viewBox="0 0 6 10"><path d="M1 1.5L5 5L1 8.5Z" fill="#8a8a8a"/></svg>
<div class="a t" style="right:922px;top:835.35px;font-size:11px;line-height:11px;color:#000;">1</div>
<div class="a" style="left:710px;top:829px;width:20px;height:20px;border:1px solid #191919;border-radius:5px 0 0 5px;background:linear-gradient(#a8a8a8,#8a8a8a)"></div>
<div class="a" style="left:730px;top:829px;width:21px;height:20px;border:1px solid #191919;border-left:none;border-radius:0;background:linear-gradient(#a8a8a8,#8a8a8a)"></div>
<div class="a" style="left:730px;top:829px;width:1px;height:20px;background:#191919"></div>
<div class="a" style="left:750px;top:829px;width:21px;height:20px;border:1px solid #191919;border-left:none;border-radius:0;background:linear-gradient(#a8a8a8,#8a8a8a)"></div>
<div class="a" style="left:750px;top:829px;width:1px;height:20px;background:#191919"></div>
<div class="a" style="left:770px;top:829px;width:21px;height:20px;border:1px solid #191919;border-left:none;border-radius:0;background:linear-gradient(#a8a8a8,#8a8a8a)"></div>
<div class="a" style="left:770px;top:829px;width:1px;height:20px;background:#191919"></div>
<div class="a" style="left:790px;top:829px;width:21px;height:20px;border:1px solid #191919;border-left:none;border-radius:0;background:linear-gradient(#a8a8a8,#8a8a8a)"></div>
<div class="a" style="left:790px;top:829px;width:1px;height:20px;background:#191919"></div>
<div class="a" style="left:810px;top:829px;width:21px;height:20px;border:1px solid #191919;border-left:none;border-radius:0 5px 5px 0;background:linear-gradient(#a8a8a8,#8a8a8a)"></div>
<div class="a" style="left:810px;top:829px;width:1px;height:20px;background:#191919"></div>
<svg class="a" style="left:711px;top:830px;" width="17" height="17" viewBox="0 0 17 17"><path d="M2.5 3V14" stroke="#111" stroke-width="2.2"/><path d="M2.5 3.5V13.5" stroke="#eee" stroke-width="0.8"/><path d="M9.5 3L4 8.5L9.5 14ZM15 3L9.5 8.5L15 14Z" fill="#eee" stroke="#111" stroke-width="1"/></svg>
<svg class="a" style="left:731px;top:830px;" width="17" height="17" viewBox="0 0 17 17"><path d="M8.5 3L3 8.5L8.5 14ZM14 3L8.5 8.5L14 14Z" fill="#eee" stroke="#111" stroke-width="1"/></svg>
<svg class="a" style="left:751px;top:830px;" width="17" height="17" viewBox="0 0 17 17"><path d="M13 2L3.5 8.5L13 15Z" fill="#eee" stroke="#111" stroke-width="1.1"/></svg>
<svg class="a" style="left:771px;top:830px;" width="17" height="17" viewBox="0 0 17 17"><path d="M4 2L13.5 8.5L4 15Z" fill="#eee" stroke="#111" stroke-width="1.1"/></svg>
<svg class="a" style="left:791px;top:830px;" width="17" height="17" viewBox="0 0 17 17"><path d="M3 3L8.5 8.5L3 14ZM8.5 3L14 8.5L8.5 14Z" fill="#eee" stroke="#111" stroke-width="1"/></svg>
<svg class="a" style="left:811px;top:830px;" width="17" height="17" viewBox="0 0 17 17"><path d="M14.5 3V14" stroke="#111" stroke-width="2.2"/><path d="M14.5 3.5V13.5" stroke="#eee" stroke-width="0.8"/><path d="M2 3L7.5 8.5L2 14ZM7.5 3L13 8.5L7.5 14Z" fill="#eee" stroke="#111" stroke-width="1"/></svg>
<div class="a" style="left:835px;top:829px;width:129px;height:20px;border:1px solid #000000;border-radius:5px;background:linear-gradient(#535353,#353535);"></div>
<div class="a t" style="left:843px;top:835.35px;font-size:11px;line-height:11px;color:#fff;">No sincronizar</div>
<svg class="a" style="left:953px;top:832px;" width="8" height="14" viewBox="0 0 8 14"><path d="M0.5 6L4 1L7.5 6Z M0.5 8L4 13L7.5 8Z" fill="#9a9a9a"/></svg>
<div class="a" style="left:980px;top:829px;width:20px;height:20px;border:1px solid #191919;border-radius:5px;background:linear-gradient(#a8a8a8,#8a8a8a);"></div>
<svg class="a" style="left:983px;top:832px;" width="14" height="14" viewBox="0 0 14 14"><circle cx="7" cy="7" r="5" fill="#e03010" stroke="#601000" stroke-width="1"/></svg>
<div class="a" style="left:1005px;top:829px;width:130px;height:20px;border:1px solid #191919;border-radius:5px 0 0 5px;background:linear-gradient(#999999,#b2b2b2)"></div>
<div class="a" style="left:1135px;top:829px;width:21px;height:20px;border:1px solid #191919;border-left:none;border-radius:0;background:linear-gradient(#a8a8a8,#8a8a8a)"></div>
<div class="a" style="left:1135px;top:829px;width:1px;height:20px;background:#191919"></div>
<div class="a" style="left:1155px;top:829px;width:21px;height:20px;border:1px solid #191919;border-left:none;border-radius:0 5px 5px 0;background:linear-gradient(#a8a8a8,#8a8a8a)"></div>
<div class="a" style="left:1155px;top:829px;width:1px;height:20px;background:#191919"></div>
<svg class="a" style="left:1009px;top:831px;" width="18" height="16" viewBox="0 0 18 16"><circle cx="5" cy="12" r="3" fill="none" stroke="#222" stroke-width="2.2"/><circle cx="5" cy="12" r="3" fill="none" stroke="#e8d890" stroke-width="1"/><path d="M5 9V2H8" fill="none" stroke="#222" stroke-width="2.2"/><path d="M5 9V2H8" fill="none" stroke="#e8d890" stroke-width="1"/><path d="M7 11L15 5" stroke="#222" stroke-width="2"/><path d="M7 11L15 5" stroke="#ddd" stroke-width="0.8"/></svg>
<svg class="a" style="left:1138px;top:831px;" width="15" height="15" viewBox="0 0 15 15"><circle cx="4" cy="11" r="2.5" fill="none" stroke="#222" stroke-width="2"/><circle cx="4" cy="11" r="2.5" fill="none" stroke="#eee" stroke-width="0.8"/><path d="M6 9L13 2" stroke="#222" stroke-width="2.2"/><path d="M6 9L13 2" stroke="#eee" stroke-width="0.9"/></svg>
<svg class="a" style="left:1158px;top:831px;" width="15" height="15" viewBox="0 0 15 15"><circle cx="4" cy="11" r="2.5" fill="none" stroke="#222" stroke-width="2"/><circle cx="4" cy="11" r="2.5" fill="none" stroke="#eee" stroke-width="0.8"/><path d="M6 9L13 2" stroke="#222" stroke-width="2.2"/><path d="M6 9L13 2" stroke="#eee" stroke-width="0.9"/><path d="M2 2L13 13M13 2L2 13" stroke="#e02020" stroke-width="1.6"/></svg>
<div class="a" style="left:1382px;top:58px;width:210px;height:26px;background:#6b6b6b"></div>
<div class="a" style="left:1382px;top:58px;width:210px;height:1px;background:#7e7e7e"></div>
<div class="a" style="left:1391px;top:61px;width:31px;height:20px;border:1px solid #000000;border-radius:5px;background:linear-gradient(#535353,#353535);"></div>
<svg class="a" style="left:1394px;top:63px;" width="16" height="16" viewBox="0 0 16 16"><rect x="2" y="1.5" width="7" height="2.5" fill="#f0a040" stroke="#402000" stroke-width="0.6"/><path d="M4 4V13M4 9H8M4 13H8" stroke="#8aa0d0" stroke-width="1"/><rect x="8" y="7.8" width="6" height="2.4" fill="#fff" stroke="#222" stroke-width="0.6"/><rect x="8" y="11.8" width="6" height="2.4" fill="#fff" stroke="#222" stroke-width="0.6"/></svg>
<svg class="a" style="left:1412px;top:64px;" width="8" height="14" viewBox="0 0 8 14"><path d="M0.5 6L4 1L7.5 6Z M0.5 8L4 13L7.5 8Z" fill="#9a9a9a"/></svg>
<div class="a t" style="left:1433px;top:67.35px;font-size:11px;line-height:11px;color:#000;">Vista</div>
<div class="a t" style="left:1478px;top:67.35px;font-size:11px;line-height:11px;color:#000;">Búsqueda</div>
<div class="a" style="left:1539px;top:61px;width:60px;height:20px;border:1px solid #000;border-right:none;border-radius:5px 0 0 5px;background:linear-gradient(#535353,#353535)"></div>
<div class="a t" style="left:1547px;top:67.35px;font-size:11px;line-height:11px;color:#fff;">Todas las</div>
<div class="a" style="left:1592px;top:58px;width:8px;height:30px;background:#c47a96"></div>
<div class="a" style="left:1382px;top:85px;width:210px;height:19px;background:#737373"></div>
<div class="a" style="left:1382px;top:104px;width:210px;height:21px;background:#6c6c6c"></div>
<div class="a" style="left:1382px;top:125px;width:210px;height:20px;background:#737373"></div>
<div class="a" style="left:1382px;top:145px;width:210px;height:20px;background:#6c6c6c"></div>
<div class="a" style="left:1382px;top:165px;width:210px;height:26px;background:#737373"></div>
<div class="a" style="left:1382px;top:85px;width:133px;height:19px;background:#80868b"></div>
<div class="a" style="left:1382px;top:83px;width:210px;height:1px;background:#5e5e5e"></div>
<div class="a" style="left:1382px;top:84px;width:210px;height:1px;background:#808080"></div>
<div class="a" style="left:1395px;top:104px;width:1px;height:70px;background:#222"></div>
<div class="a" style="left:1382px;top:95px;width:8px;height:1px;background:#222"></div>
<div class="a" style="left:1400px;top:155px;width:11px;height:1px;background:#222"></div>
<svg class="a" style="left:1388px;top:86px;" width="19" height="19" viewBox="0 0 19 19"><circle cx="9.5" cy="9.5" r="9" fill="#8e949a"/></svg>
<svg class="a" style="left:1390px;top:87px;" width="18" height="17" viewBox="0 0 18 17"><circle cx="3.5" cy="3" r="2" fill="#f0f0a0" stroke="#a0a040" stroke-width="1"/><rect x="8.5" y="1.5" width="7" height="11" rx="3" fill="#2a5aa8" stroke="#10204a" stroke-width="1"/><rect x="10" y="3" width="3" height="8" rx="1.5" fill="#a8c8f0"/><circle cx="7" cy="12" r="4" fill="#151515"/><circle cx="7" cy="11.8" r="3.1" fill="#f0f0f0"/><circle cx="6" cy="10.8" r="1.2" fill="#fff"/></svg>
<div class="a t" style="left:1409px;top:91.35px;font-size:11px;line-height:11px;color:#000;">Scene</div>
<svg class="a" style="left:1396px;top:109px;" width="11" height="11" viewBox="0 0 11 11"><circle cx="5.5" cy="5.5" r="4.5" fill="#ccc" stroke="#111" stroke-width="1"/><path d="M5.5 3V8M3 5.5H8" stroke="#111" stroke-width="1.2"/></svg>
<svg class="a" style="left:1410px;top:106px;" width="17" height="17" viewBox="0 0 17 17"><rect x="4" y="4" width="11" height="11" fill="#e8e0b8" stroke="#222" stroke-width="1"/><rect x="1" y="1" width="11" height="11" fill="#fff" stroke="#222" stroke-width="1"/><rect x="6" y="3" width="3" height="5" fill="#3d6fc0"/><circle cx="5" cy="8" r="2" fill="#ddd" stroke="#222" stroke-width="0.6"/><circle cx="3" cy="3" r="1.2" fill="#e0d040"/></svg>
<div class="a t" style="left:1429px;top:111.35px;font-size:11px;line-height:11px;color:#000;">Capas de procesa</div>
<div class="a" style="left:1515px;top:104px;width:60px;height:21px;background:#6c6c6c"></div>
<svg class="a" style="left:1409px;top:126px;" width="19" height="19" viewBox="0 0 19 19"><circle cx="9.5" cy="9.5" r="9" fill="#a0a0c0"/><circle cx="9.5" cy="9.5" r="7" fill="#16264a"/><circle cx="9.5" cy="9.5" r="6" fill="#4a8ad0"/><path d="M5 6Q8 4 10 7T8 12Q5 11 5 6ZM11 10Q14 9 14 12Q12 14 11 12Z" fill="#4c8c3c"/></svg>
<div class="a t" style="left:1429px;top:131.35px;font-size:11px;line-height:11px;color:#000;">World</div>
<svg class="a" style="left:1392px;top:150px;" width="11" height="11" viewBox="0 0 11 11"><circle cx="5.5" cy="5.5" r="4.5" fill="#ccc" stroke="#111" stroke-width="1"/><path d="M5.5 3V8M3 5.5H8" stroke="#111" stroke-width="1.2"/></svg>
<svg class="a" style="left:1410px;top:146px;" width="17" height="18" viewBox="0 0 17 18"><circle cx="5" cy="5" r="4" fill="#e0902a" stroke="#5a3000" stroke-width="1"/><circle cx="12" cy="5" r="4" fill="#e0902a" stroke="#5a3000" stroke-width="1"/><circle cx="5" cy="5" r="1.3" fill="#5a3000"/><circle cx="12" cy="5" r="1.3" fill="#5a3000"/><rect x="3" y="9" width="10" height="6" fill="#e0902a" stroke="#5a3000" stroke-width="1"/><path d="M13 12L17 10V15Z" fill="#e0902a" stroke="#5a3000" stroke-width="0.8"/></svg>
<div class="a t" style="left:1429px;top:151.35px;font-size:11px;line-height:11px;color:#000;">Camera</div>
<div class="a" style="left:1478px;top:149px;width:2px;height:12px;background:#3a3a3a"></div>
<svg class="a" style="left:1486px;top:145px;" width="20" height="20" viewBox="0 0 20 20"><circle cx="10" cy="10" r="9.5" fill="#8a8a8a"/><circle cx="7" cy="7" r="3" fill="none" stroke="#aaa" stroke-width="1.5"/><circle cx="13" cy="7" r="3" fill="none" stroke="#aaa" stroke-width="1.5"/><rect x="5" y="10" width="9" height="5" fill="none" stroke="#aaa" stroke-width="1.5"/></svg>
<svg class="a" style="left:1517px;top:148px;" width="16" height="14" viewBox="0 0 16 14"><path d="M1 7Q8 0 15 7Q8 14 1 7Z" fill="#fff" stroke="#222" stroke-width="1"/><circle cx="8" cy="7" r="2.8" fill="#222"/></svg>
<svg class="a" style="left:1539px;top:146px;" width="12" height="17" viewBox="0 0 12 17"><path d="M2 1V14L5 11L8 16L10 15L7.5 10H12Z" fill="#fff" stroke="#111" stroke-width="1"/></svg>
<svg class="a" style="left:1557px;top:147px;" width="16" height="15" viewBox="0 0 16 15"><rect x="1.5" y="3.5" width="13" height="10" fill="#eee" stroke="#222" stroke-width="1"/><rect x="3" y="1.5" width="4" height="2.5" fill="#eee" stroke="#222" stroke-width="0.8"/><circle cx="8" cy="8.5" r="3.3" fill="#222"/><circle cx="8" cy="8.5" r="1.5" fill="#c03030"/></svg>
<svg class="a" style="left:1410px;top:166px;" width="17" height="8" viewBox="0 0 17 8"><path d="M2 2H15L12 8M2 2L5 8" stroke="#e0902a" stroke-width="2" fill="none"/><circle cx="2" cy="2" r="1.5" fill="#fff"/><circle cx="15" cy="2" r="1.5" fill="#fff"/></svg>
<div class="a" style="left:1473px;top:168px;width:2px;height:5px;background:#3a3a3a"></div>
<svg class="a" style="left:1476px;top:165px;" width="22" height="8" viewBox="0 0 22 8"><circle cx="11" cy="11" r="10" fill="#8a8a8a"/></svg>
<svg class="a" style="left:1391px;top:171px;" width="11" height="11" viewBox="0 0 11 11"><circle cx="5.5" cy="5.5" r="4.5" fill="#ccc" stroke="#111" stroke-width="1"/><path d="M5.5 3V8M3 5.5H8" stroke="#111" stroke-width="1.2"/></svg>
<div class="a" style="left:1515px;top:85px;width:1px;height:87px;background:#626262"></div>
<div class="a" style="left:1535px;top:85px;width:1px;height:87px;background:#626262"></div>
<div class="a" style="left:1555px;top:85px;width:1px;height:87px;background:#626262"></div>
<div class="a" style="left:1575px;top:89px;width:13px;height:80px;border:1px solid #5a5a5a;border-radius:7px;background:#606060"></div>
<div class="a" style="left:1576px;top:90px;width:11px;height:57px;border-radius:6px;background:linear-gradient(90deg,#8e8e8e,#7a7a7a)"></div>
<div class="a" style="left:1382px;top:172px;width:194px;height:19px;background:#6e6e6e"></div>
<div class="a" style="left:1386px;top:174px;width:184px;height:14px;border:1px solid #5a5a5a;border-radius:7px;background:#606060"></div>
<div class="a" style="left:1395px;top:175px;width:117px;height:12px;border-radius:6px;background:linear-gradient(#959595,#7e7e7e)"></div>
<div class="a" style="left:1382px;top:191px;width:210px;height:1px;background:#000"></div>
<div class="a" style="left:1382px;top:192px;width:210px;height:660px;background:#727272"></div>
<div class="a" style="left:1382px;top:192px;width:210px;height:24px;background:#6b6b6b"></div>
<div class="a" style="left:1382px;top:192px;width:210px;height:1px;background:#7e7e7e"></div>
<div class="a" style="left:1391px;top:196px;width:30px;height:19px;border:1px solid #000000;border-radius:5px;background:linear-gradient(#535353,#353535);"></div>
<svg class="a" style="left:1394px;top:198px;" width="17" height="15" viewBox="0 0 17 15"><rect x="1.5" y="1.5" width="13" height="5" rx="2" fill="#ddd" stroke="#111" stroke-width="0.9"/><rect x="2.5" y="2.5" width="7" height="3" fill="#555"/><rect x="1.5" y="8.5" width="13" height="5" rx="2" fill="#fff" stroke="#111" stroke-width="0.9"/><path d="M3 11L5 9.5V12.5ZM13 11L11 9.5V12.5Z" fill="#111"/><rect x="5.5" y="10" width="5" height="2" fill="#ccc"/></svg>
<svg class="a" style="left:1412px;top:198px;" width="8" height="14" viewBox="0 0 8 14"><path d="M0.5 6L4 1L7.5 6Z M0.5 8L4 13L7.5 8Z" fill="#9a9a9a"/></svg>
<div class="a" style="left:1430px;top:196px;width:20px;height:19px;border:1px solid #000;border-radius:5px 0 0 5px;background:linear-gradient(#6590d8,#4a74b8)"></div>
<div class="a" style="left:1449px;top:196px;width:21px;height:19px;border:1px solid #000;border-left:none;background:linear-gradient(#535353,#353535)"></div>
<div class="a" style="left:1449px;top:196px;width:1px;height:19px;background:#000"></div>
<div class="a" style="left:1469px;top:196px;width:21px;height:19px;border:1px solid #000;border-left:none;background:linear-gradient(#535353,#353535)"></div>
<div class="a" style="left:1469px;top:196px;width:1px;height:19px;background:#000"></div>
<div class="a" style="left:1489px;top:196px;width:21px;height:19px;border:1px solid #000;border-left:none;background:linear-gradient(#535353,#353535)"></div>
<div class="a" style="left:1489px;top:196px;width:1px;height:19px;background:#000"></div>
<div class="a" style="left:1509px;top:196px;width:20px;height:19px;border:1px solid #000;border-left:none;background:linear-gradient(#535353,#353535)"></div>
<div class="a" style="left:1509px;top:196px;width:1px;height:19px;background:#000"></div>
<div class="a" style="left:1528px;top:196px;width:21px;height:19px;border:1px solid #000;border-left:none;background:linear-gradient(#535353,#353535)"></div>
<div class="a" style="left:1528px;top:196px;width:1px;height:19px;background:#000"></div>
<div class="a" style="left:1548px;top:196px;width:21px;height:19px;border:1px solid #000;border-left:none;background:linear-gradient(#535353,#353535)"></div>
<div class="a" style="left:1548px;top:196px;width:1px;height:19px;background:#000"></div>
<div class="a" style="left:1568px;top:196px;width:21px;height:19px;border:1px solid #000;border-left:none;background:linear-gradient(#535353,#353535)"></div>
<div class="a" style="left:1568px;top:196px;width:1px;height:19px;background:#000"></div>
<svg class="a" style="left:1432px;top:198px;" width="16" height="16" viewBox="0 0 16 16"><rect x="1.5" y="4.5" width="14" height="10" rx="1" fill="#333" stroke="#111"/><rect x="2" y="5" width="13" height="3" fill="#e8e8e8"/><rect x="3" y="2.5" width="3" height="2" fill="#e8e8e8" stroke="#111" stroke-width="0.6"/><circle cx="9.5" cy="10" r="3.6" fill="#eee" stroke="#111" stroke-width="0.8"/><circle cx="9.5" cy="10" r="2.3" fill="#802020"/><circle cx="5" cy="6.5" r="0.8" fill="#e02020"/></svg>
<svg class="a" style="left:1451px;top:198px;" width="16" height="16" viewBox="0 0 16 16"><rect x="5" y="4" width="10" height="10" fill="#e8e0b8" stroke="#222"/><rect x="2" y="1" width="10" height="10" fill="#fff" stroke="#222"/><rect x="6" y="3" width="3" height="5" fill="#3d6fc0"/><circle cx="5" cy="8" r="1.8" fill="#ddd" stroke="#222" stroke-width="0.6"/></svg>
<svg class="a" style="left:1471px;top:198px;" width="16" height="16" viewBox="0 0 16 16"><circle cx="4" cy="3" r="1.8" fill="none" stroke="#e0e060" stroke-width="1"/><rect x="9" y="3" width="5" height="9" rx="2.5" fill="#3d6fc0"/><circle cx="7" cy="12" r="3.2" fill="#ddd" stroke="#222" stroke-width="0.8"/></svg>
<svg class="a" style="left:1491px;top:198px;" width="16" height="16" viewBox="0 0 16 16"><circle cx="8" cy="8" r="6.5" fill="#16264a"/><circle cx="8" cy="8" r="5.5" fill="#4a8ad0"/><path d="M4 5Q7 3 9 6T7 11Q4 10 4 5ZM10 9Q13 8 13 11Q11 13 10 11Z" fill="#4c8c3c"/></svg>
<svg class="a" style="left:1511px;top:198px;" width="16" height="16" viewBox="0 0 16 16"><path d="M8 2L14 5V11L8 14L2 11V5Z" fill="#c88a4a" stroke="#3a2000" stroke-width="0.8"/><path d="M2 5L8 8L14 5M8 8V14" stroke="#7a4a1a" stroke-width="0.8" fill="none"/><path d="M8 2L14 5L8 8L2 5Z" fill="#e8b078"/></svg>
<svg class="a" style="left:1530px;top:198px;" width="16" height="16" viewBox="0 0 16 16"><path d="M3 11L6 8M10 4L13 1" stroke="#ccc" stroke-width="1.5"/><rect x="1.5" y="7.5" width="7" height="5" rx="2.5" transform="rotate(-45 5 10)" fill="none" stroke="#ccc" stroke-width="1.6"/><rect x="7.5" y="3.5" width="7" height="5" rx="2.5" transform="rotate(-45 11 6)" fill="none" stroke="#ccc" stroke-width="1.6"/></svg>
<svg class="a" style="left:1550px;top:198px;" width="16" height="16" viewBox="0 0 16 16"><path d="M3 13L9 7" stroke="#6a8ac0" stroke-width="2.6"/><path d="M9 7A3.5 3.5 0 1 1 12 4L10.5 5.5L11 6.5L13 5A3.5 3.5 0 0 1 9 7Z" fill="#6a8ac0"/></svg>
<svg class="a" style="left:1570px;top:198px;" width="16" height="16" viewBox="0 0 16 16"><path d="M3 3H13L8 13Z" fill="none" stroke="#aaa" stroke-width="1"/><rect x="1.5" y="1.5" width="3" height="3" fill="#ddd"/><rect x="11.5" y="1.5" width="3" height="3" fill="#ddd"/><rect x="6.5" y="11.5" width="3" height="3" fill="#ddd"/></svg>
<div class="a" style="left:1592px;top:192px;width:8px;height:30px;background:#c47a96"></div>
<div class="a" style="left:1382px;top:216px;width:210px;height:1px;background:#808080"></div>
<div class="a" style="left:1575px;top:224px;width:13px;height:624px;border:1px solid #5a5a5a;border-radius:7px;background:#5e5e5e"></div>
<div class="a" style="left:1576px;top:225px;width:11px;height:507px;border-radius:6px;background:linear-gradient(90deg,#8e8e8e,#7a7a7a)"></div>
<svg class="a" style="left:1390px;top:225px;" width="19" height="19" viewBox="0 0 19 19"><g transform="rotate(45 9.5 9.5)"><rect x="7" y="1" width="5" height="3" fill="#ddd" stroke="#222" stroke-width="0.9"/><path d="M6.5 4H12.5L11.5 9H7.5Z" fill="#f0f0f0" stroke="#222" stroke-width="0.9"/><rect x="4.5" y="9" width="10" height="2.5" fill="#ccc" stroke="#222" stroke-width="0.9"/><path d="M9.5 11.5V18" stroke="#222" stroke-width="2"/><path d="M9.5 11.5V17.5" stroke="#ddd" stroke-width="0.9"/></g></svg>
<svg class="a" style="left:1415px;top:227px;" width="18" height="17" viewBox="0 0 18 17"><circle cx="3.5" cy="3" r="2" fill="#f0f0a0" stroke="#a0a040" stroke-width="1"/><rect x="8.5" y="1.5" width="7" height="11" rx="3" fill="#2a5aa8" stroke="#10204a" stroke-width="1"/><rect x="10" y="3" width="3" height="8" rx="1.5" fill="#a8c8f0"/><circle cx="7" cy="12" r="4" fill="#151515"/><circle cx="7" cy="11.8" r="3.1" fill="#f0f0f0"/><circle cx="6" cy="10.8" r="1.2" fill="#fff"/></svg>
<div class="a t" style="left:1434px;top:232.35px;font-size:11px;line-height:11px;color:#000;">Scene</div>
<div class="a" style="left:1387px;top:253px;width:184px;height:1px;background:#555"></div>
<div class="a" style="left:1387px;top:254px;width:184px;height:1px;background:#7c7c7c"></div>
<svg class="a" style="left:1395px;top:260.5px;" width="10" height="8" viewBox="0 0 10 8"><path d="M0.5 0.5H9.5L5 7.5Z" fill="#111"/></svg>
<div class="a t" style="left:1407px;top:260.00px;font-size:12px;line-height:12px;color:#000;">Procesar</div>
<svg class="a" style="left:1553px;top:262.5px;" width="12" height="6" viewBox="0 0 12 6"><rect x="1" y="1" width="1" height="1" fill="#fff"/><rect x="1" y="2" width="1" height="1" fill="#000"/><rect x="1" y="4" width="1" height="1" fill="#fff"/><rect x="1" y="5" width="1" height="1" fill="#000"/><rect x="4" y="1" width="1" height="1" fill="#fff"/><rect x="4" y="2" width="1" height="1" fill="#000"/><rect x="4" y="4" width="1" height="1" fill="#fff"/><rect x="4" y="5" width="1" height="1" fill="#000"/><rect x="7" y="1" width="1" height="1" fill="#fff"/><rect x="7" y="2" width="1" height="1" fill="#000"/><rect x="7" y="4" width="1" height="1" fill="#fff"/><rect x="7" y="5" width="1" height="1" fill="#000"/><rect x="10" y="1" width="1" height="1" fill="#fff"/><rect x="10" y="2" width="1" height="1" fill="#000"/><rect x="10" y="4" width="1" height="1" fill="#fff"/><rect x="10" y="5" width="1" height="1" fill="#000"/></svg>
<div class="a" style="left:1390px;top:286px;width:59px;height:20px;border:1px solid #191919;border-radius:5px 0 0 5px;background:linear-gradient(#a8a8a8,#8a8a8a)"></div>
<div class="a" style="left:1449px;top:286px;width:60px;height:20px;border:1px solid #191919;border-left:none;border-radius:0;background:linear-gradient(#a8a8a8,#8a8a8a)"></div>
<div class="a" style="left:1449px;top:286px;width:1px;height:20px;background:#191919"></div>
<div class="a" style="left:1508px;top:286px;width:60px;height:20px;border:1px solid #191919;border-left:none;border-radius:0 5px 5px 0;background:linear-gradient(#a8a8a8,#8a8a8a)"></div>
<div class="a" style="left:1508px;top:286px;width:1px;height:20px;background:#191919"></div>
<svg class="a" style="left:1393px;top:288px;" width="20" height="17" viewBox="0 0 20 17"><rect x="2" y="5" width="13" height="10" fill="#eee" stroke="#222"/><circle cx="8.5" cy="10" r="3.2" fill="#222"/><circle cx="8.5" cy="10" r="1.6" fill="#c03030"/><path d="M15 1V7M12 4H18" stroke="#ffd040" stroke-width="2"/></svg>
<div class="a t" style="left:1412px;top:292.35px;font-size:11px;line-height:11px;color:#000;">Imagen</div>
<svg class="a" style="left:1451px;top:288px;" width="20" height="17" viewBox="0 0 20 17"><rect x="2" y="7" width="14" height="8" fill="#444" stroke="#222"/><path d="M2 4L15 1L16 4L3 7Z" fill="#eee" stroke="#222" stroke-width="0.8"/><path d="M5 3.5L7 6M9 2.5L11 5" stroke="#222" stroke-width="1.2"/><rect x="3" y="9" width="12" height="4" fill="#ccc"/><path d="M1 3L5 2" stroke="#6a8ac0" stroke-width="1.5"/></svg>
<div class="a t" style="left:1467px;top:292.35px;font-size:11px;line-height:11px;color:#000;">Animaci</div>
<svg class="a" style="left:1510px;top:288px;" width="18" height="17" viewBox="0 0 18 17"><path d="M2 6H5L9 2V15L5 11H2Z" fill="#ddd" stroke="#222" stroke-width="0.8"/><path d="M11 5Q13 8.5 11 12M13 3Q16 8.5 13 14" stroke="#6a8ac0" stroke-width="1.3" fill="none"/></svg>
<div class="a t" style="left:1530px;top:292.35px;font-size:11px;line-height:11px;color:#000;">Audio</div>
<div class="a t" style="left:1397px;top:317.35px;font-size:11px;line-height:11px;color:#000;">Visualiza</div>
<div class="a" style="left:1453px;top:312px;width:94px;height:19px;border:1px solid #000000;border-radius:5px 0 0 5px;background:linear-gradient(#535353,#353535)"></div>
<div class="a" style="left:1547px;top:312px;width:21px;height:19px;border:1px solid #191919;border-left:none;border-radius:0 5px 5px 0;background:linear-gradient(#a8a8a8,#8a8a8a)"></div>
<div class="a" style="left:1547px;top:312px;width:1px;height:19px;background:#191919"></div>
<div class="a t" style="left:1461px;top:317.35px;font-size:11px;line-height:11px;color:#fff;">Editor de imá</div>
<svg class="a" style="left:1536px;top:314px;" width="8" height="14" viewBox="0 0 8 14"><path d="M0.5 6L4 1L7.5 6Z M0.5 8L4 13L7.5 8Z" fill="#9a9a9a"/></svg>
<svg class="a" style="left:1550px;top:314px;" width="15" height="15" viewBox="0 0 15 15"><rect x="2" y="7" width="11" height="7" fill="#eee" stroke="#222"/><path d="M4 7V4A3 3 0 0 1 10 4" fill="none" stroke="#222" stroke-width="1.6"/><rect x="6" y="9" width="2" height="3" fill="#222"/></svg>
<div class="a" style="left:1387px;top:339px;width:184px;height:1px;background:#555"></div>
<div class="a" style="left:1387px;top:340px;width:184px;height:1px;background:#7c7c7c"></div>
<svg class="a" style="left:1395px;top:345.5px;" width="10" height="8" viewBox="0 0 10 8"><path d="M0.5 0.5H9.5L5 7.5Z" fill="#111"/></svg>
<div class="a t" style="left:1407px;top:345.00px;font-size:12px;line-height:12px;color:#000;">Dimensiones</div>
<svg class="a" style="left:1553px;top:347.5px;" width="12" height="6" viewBox="0 0 12 6"><rect x="1" y="1" width="1" height="1" fill="#fff"/><rect x="1" y="2" width="1" height="1" fill="#000"/><rect x="1" y="4" width="1" height="1" fill="#fff"/><rect x="1" y="5" width="1" height="1" fill="#000"/><rect x="4" y="1" width="1" height="1" fill="#fff"/><rect x="4" y="2" width="1" height="1" fill="#000"/><rect x="4" y="4" width="1" height="1" fill="#fff"/><rect x="4" y="5" width="1" height="1" fill="#000"/><rect x="7" y="1" width="1" height="1" fill="#fff"/><rect x="7" y="2" width="1" height="1" fill="#000"/><rect x="7" y="4" width="1" height="1" fill="#fff"/><rect x="7" y="5" width="1" height="1" fill="#000"/><rect x="10" y="1" width="1" height="1" fill="#fff"/><rect x="10" y="2" width="1" height="1" fill="#000"/><rect x="10" y="4" width="1" height="1" fill="#fff"/><rect x="10" y="5" width="1" height="1" fill="#000"/></svg>
<div class="a" style="left:1390px;top:372px;width:137px;height:19px;border:1px solid #000000;border-radius:5px 0 0 5px;background:linear-gradient(#535353,#353535)"></div>
<div class="a" style="left:1527px;top:372px;width:21px;height:19px;border:1px solid #191919;border-left:none;border-radius:0;background:linear-gradient(#a8a8a8,#8a8a8a)"></div>
<div class="a" style="left:1527px;top:372px;width:1px;height:19px;background:#191919"></div>
<div class="a" style="left:1547px;top:372px;width:22px;height:19px;border:1px solid #191919;border-left:none;border-radius:0 5px 5px 0;background:linear-gradient(#a8a8a8,#8a8a8a)"></div>
<div class="a" style="left:1547px;top:372px;width:1px;height:19px;background:#191919"></div>
<div class="a t" style="left:1397px;top:377.35px;font-size:11px;line-height:11px;color:#fff;">Ajustes de procesami...</div>
<svg class="a" style="left:1516px;top:374px;" width="8" height="14" viewBox="0 0 8 14"><path d="M0.5 6L4 1L7.5 6Z M0.5 8L4 13L7.5 8Z" fill="#9a9a9a"/></svg>
<svg class="a" style="left:1530px;top:374px;" width="14" height="14" viewBox="0 0 14 14"><path d="M7 2V12M2 7H12" stroke="#fff" stroke-width="3.4"/><path d="M7 2.5V11.5M2.5 7H11.5" stroke="#222" stroke-width="1.4"/></svg>
<svg class="a" style="left:1550px;top:374px;" width="14" height="14" viewBox="0 0 14 14"><path d="M2 7H12" stroke="#fff" stroke-width="3.4"/><path d="M2.5 7H11.5" stroke="#222" stroke-width="1.4"/></svg>
<div class="a t" style="left:1397px;top:402.35px;font-size:11px;line-height:11px;color:#000;">Resolución:</div>
<div class="a t" style="left:1490px;top:402.35px;font-size:11px;line-height:11px;color:#000;">Rango de foto...</div>
<div class="a" style="left:1390px;top:416px;width:84px;height:20px;border:1px solid #191919;border-radius:10px 10px 0 0;background:linear-gradient(#a0a0a0,#b4b4b4)"></div>
<div class="a" style="left:1390px;top:435px;width:84px;height:21px;border:1px solid #191919;border-radius:0;background:linear-gradient(#a0a0a0,#b4b4b4)"></div>
<div class="a" style="left:1391px;top:435px;width:82px;height:1px;background:#555"></div>
<div class="a" style="left:1390px;top:455px;width:84px;height:21px;border:1px solid #191919;border-radius:0 0 10px 10px;background:linear-gradient(#a0a0a0,#b4b4b4)"></div>
<div class="a" style="left:1391px;top:455px;width:82px;height:1px;background:#555"></div>
<div class="a" style="left:1391px;top:456px;width:44px;height:18px;border-radius:0 0 0 9px;background:linear-gradient(#5a5a5a,#6e6e6e)"></div>
<svg class="a" style="left:1395px;top:421px;" width="6" height="10" viewBox="0 0 6 10"><path d="M5 1.5L1 5L5 8.5Z" fill="#8a8a8a"/></svg>
<svg class="a" style="left:1466px;top:421px;" width="6" height="10" viewBox="0 0 6 10"><path d="M1 1.5L5 5L1 8.5Z" fill="#8a8a8a"/></svg>
<svg class="a" style="left:1395px;top:441px;" width="6" height="10" viewBox="0 0 6 10"><path d="M5 1.5L1 5L5 8.5Z" fill="#8a8a8a"/></svg>
<svg class="a" style="left:1466px;top:441px;" width="6" height="10" viewBox="0 0 6 10"><path d="M1 1.5L5 5L1 8.5Z" fill="#8a8a8a"/></svg>
<div class="a t" style="left:1403px;top:421.85px;font-size:11px;line-height:11px;color:#000;">:</div>
<div class="a t" style="right:141px;top:421.85px;font-size:11px;line-height:11px;color:#000;">1920 px</div>
<div class="a t" style="left:1405px;top:441.35px;font-size:11px;line-height:11px;color:#000;">Y:1080 px</div>
<div class="a t" style="right:140px;top:461.35px;font-size:11px;line-height:11px;color:#000;">50%</div>
<div class="a" style="left:1482px;top:416px;width:85px;height:20px;border:1px solid #191919;border-radius:10px 10px 0 0;background:linear-gradient(#a0a0a0,#b4b4b4)"></div>
<div class="a" style="left:1482px;top:435px;width:85px;height:21px;border:1px solid #191919;border-radius:0;background:linear-gradient(#a0a0a0,#b4b4b4)"></div>
<div class="a" style="left:1483px;top:435px;width:83px;height:1px;background:#555"></div>
<div class="a" style="left:1482px;top:455px;width:85px;height:21px;border:1px solid #191919;border-radius:0 0 10px 10px;background:linear-gradient(#a0a0a0,#b4b4b4)"></div>
<div class="a" style="left:1483px;top:455px;width:83px;height:1px;background:#555"></div>
<svg class="a" style="left:1487px;top:421px;" width="6" height="10" viewBox="0 0 6 10"><path d="M5 1.5L1 5L5 8.5Z" fill="#8a8a8a"/></svg>
<svg class="a" style="left:1558px;top:421px;" width="6" height="10" viewBox="0 0 6 10"><path d="M1 1.5L5 5L1 8.5Z" fill="#8a8a8a"/></svg>
<svg class="a" style="left:1487px;top:441px;" width="6" height="10" viewBox="0 0 6 10"><path d="M5 1.5L1 5L5 8.5Z" fill="#8a8a8a"/></svg>
<svg class="a" style="left:1558px;top:441px;" width="6" height="10" viewBox="0 0 6 10"><path d="M1 1.5L5 5L1 8.5Z" fill="#8a8a8a"/></svg>
<svg class="a" style="left:1487px;top:461px;" width="6" height="10" viewBox="0 0 6 10"><path d="M5 1.5L1 5L5 8.5Z" fill="#8a8a8a"/></svg>
<svg class="a" style="left:1558px;top:461px;" width="6" height="10" viewBox="0 0 6 10"><path d="M1 1.5L5 5L1 8.5Z" fill="#8a8a8a"/></svg>
<div class="a t" style="left:1498px;top:421.85px;font-size:11px;line-height:11px;color:#000;">F. inicial:1</div>
<div class="a t" style="left:1498px;top:441.35px;font-size:11px;line-height:11px;color:#000;">F. fin: 250</div>
<div class="a t" style="left:1498px;top:461.35px;font-size:11px;line-height:11px;color:#000;">Interval: 1</div>
<div class="a t" style="left:1397px;top:482.35px;font-size:11px;line-height:11px;color:#000;">Proporción de...</div>
<div class="a t" style="left:1490px;top:482.35px;font-size:11px;line-height:11px;color:#000;">Frecuencia:</div>
<div class="a" style="left:1390px;top:496px;width:84px;height:20px;border:1px solid #191919;border-radius:10px 10px 0 0;background:linear-gradient(#a0a0a0,#b4b4b4)"></div>
<div class="a" style="left:1390px;top:515px;width:84px;height:21px;border:1px solid #191919;border-radius:0 0 10px 10px;background:linear-gradient(#a0a0a0,#b4b4b4)"></div>
<div class="a" style="left:1391px;top:515px;width:82px;height:1px;background:#555"></div>
<svg class="a" style="left:1395px;top:501px;" width="6" height="10" viewBox="0 0 6 10"><path d="M5 1.5L1 5L5 8.5Z" fill="#8a8a8a"/></svg>
<svg class="a" style="left:1466px;top:501px;" width="6" height="10" viewBox="0 0 6 10"><path d="M1 1.5L5 5L1 8.5Z" fill="#8a8a8a"/></svg>
<svg class="a" style="left:1395px;top:521px;" width="6" height="10" viewBox="0 0 6 10"><path d="M5 1.5L1 5L5 8.5Z" fill="#8a8a8a"/></svg>
<svg class="a" style="left:1466px;top:521px;" width="6" height="10" viewBox="0 0 6 10"><path d="M1 1.5L5 5L1 8.5Z" fill="#8a8a8a"/></svg>
<div class="a t" style="left:1405px;top:501.35px;font-size:11px;line-height:11px;color:#000;">X:</div>
<div class="a t" style="right:141px;top:501.35px;font-size:11px;line-height:11px;color:#000;">1.000</div>
<div class="a t" style="left:1405px;top:521.35px;font-size:11px;line-height:11px;color:#000;">Y:</div>
<div class="a t" style="right:141px;top:521.35px;font-size:11px;line-height:11px;color:#000;">1.000</div>
<div class="a" style="left:1482px;top:496px;width:85px;height:20px;border:1px solid #000000;border-radius:5px;background:linear-gradient(#535353,#353535);"></div>
<div class="a t" style="left:1490px;top:501.35px;font-size:11px;line-height:11px;color:#fff;">24 fps</div>
<svg class="a" style="left:1556px;top:499px;" width="8" height="14" viewBox="0 0 8 14"><path d="M0.5 6L4 1L7.5 6Z M0.5 8L4 13L7.5 8Z" fill="#9a9a9a"/></svg>
<div class="a t" style="left:1490px;top:522.35px;font-size:11px;line-height:11px;color:#000;">Remapeo de t</div>
<div class="a" style="left:1482px;top:537px;width:42px;height:19px;border:1px solid #191919;border-radius:10px 0 0 10px;background:linear-gradient(#a0a0a0,#b4b4b4)"></div>
<div class="a" style="left:1523px;top:537px;width:44px;height:19px;border:1px solid #191919;border-radius:0 10px 10px 0;background:linear-gradient(#a0a0a0,#b4b4b4)"></div>
<svg class="a" style="left:1487px;top:541px;" width="6" height="10" viewBox="0 0 6 10"><path d="M5 1.5L1 5L5 8.5Z" fill="#8a8a8a"/></svg>
<svg class="a" style="left:1514px;top:541px;" width="6" height="10" viewBox="0 0 6 10"><path d="M1 1.5L5 5L1 8.5Z" fill="#8a8a8a"/></svg>
<svg class="a" style="left:1530px;top:541px;" width="6" height="10" viewBox="0 0 6 10"><path d="M5 1.5L1 5L5 8.5Z" fill="#8a8a8a"/></svg>
<svg class="a" style="left:1558px;top:541px;" width="6" height="10" viewBox="0 0 6 10"><path d="M1 1.5L5 5L1 8.5Z" fill="#8a8a8a"/></svg>
<div class="a t" style="left:1499px;top:542.35px;font-size:11px;line-height:11px;color:#000;">1</div>
<div class="a t" style="left:1537px;top:542.35px;font-size:11px;line-height:11px;color:#000;">10</div>
<div class="a" style="left:1393px;top:542px;width:14px;height:14px;border:1px solid #000000;border-radius:3px;background:linear-gradient(#555555,#373737);"></div>
<div class="a t" style="left:1415px;top:543.35px;font-size:11px;line-height:11px;color:#000;">M</div>
<div class="a" style="left:1440px;top:542px;width:14px;height:14px;border:1px solid #4a4a4a;border-radius:3px;background:linear-gradient(#666,#5a5a5a)"></div>
<div class="a t" style="left:1461px;top:543.35px;font-size:11px;line-height:11px;color:#444;">R</div>
<div class="a" style="left:1387px;top:566px;width:184px;height:1px;background:#555"></div>
<div class="a" style="left:1387px;top:567px;width:184px;height:1px;background:#7c7c7c"></div>
<svg class="a" style="left:1395px;top:572.5px;" width="10" height="8" viewBox="0 0 10 8"><path d="M0.5 0.5H9.5L5 7.5Z" fill="#111"/></svg>
<div class="a" style="left:1408px;top:570.5px;width:14px;height:14px;border:1px solid #000000;border-radius:3px;background:linear-gradient(#555555,#373737);"></div>
<svg class="a" style="left:1409px;top:570.5px;" width="13" height="13" viewBox="0 0 13 13"><path d="M2.5 6.5L5.5 9.5L11 2.5" stroke="#fff" stroke-width="1.8" fill="none"/></svg>
<div class="a t" style="left:1427px;top:572.00px;font-size:12px;line-height:12px;color:#000;">Suavizado de bordes</div>
<svg class="a" style="left:1553px;top:574.5px;" width="12" height="6" viewBox="0 0 12 6"><rect x="1" y="1" width="1" height="1" fill="#fff"/><rect x="1" y="2" width="1" height="1" fill="#000"/><rect x="1" y="4" width="1" height="1" fill="#fff"/><rect x="1" y="5" width="1" height="1" fill="#000"/><rect x="4" y="1" width="1" height="1" fill="#fff"/><rect x="4" y="2" width="1" height="1" fill="#000"/><rect x="4" y="4" width="1" height="1" fill="#fff"/><rect x="4" y="5" width="1" height="1" fill="#000"/><rect x="7" y="1" width="1" height="1" fill="#fff"/><rect x="7" y="2" width="1" height="1" fill="#000"/><rect x="7" y="4" width="1" height="1" fill="#fff"/><rect x="7" y="5" width="1" height="1" fill="#000"/><rect x="10" y="1" width="1" height="1" fill="#fff"/><rect x="10" y="2" width="1" height="1" fill="#000"/><rect x="10" y="4" width="1" height="1" fill="#fff"/><rect x="10" y="5" width="1" height="1" fill="#000"/></svg>
<div class="a" style="left:1390px;top:598px;width:21px;height:20px;border:1px solid #000;border-radius:5px 0 0 5px;background:linear-gradient(#555555,#373737)"></div>
<div class="a t" style="left:1250.5px;width:300px;text-align:center;top:603.35px;font-size:11px;line-height:11px;color:#fff;">5</div>
<div class="a" style="left:1410px;top:598px;width:22px;height:20px;border:1px solid #000;border-radius:0;background:linear-gradient(#658fd1,#4771b3)"></div>
<div class="a t" style="left:1271.0px;width:300px;text-align:center;top:603.35px;font-size:11px;line-height:11px;color:#000;">8</div>
<div class="a" style="left:1431px;top:598px;width:21px;height:20px;border:1px solid #000;border-radius:0;background:linear-gradient(#555555,#373737)"></div>
<div class="a t" style="left:1291.5px;width:300px;text-align:center;top:603.35px;font-size:11px;line-height:11px;color:#fff;">11</div>
<div class="a" style="left:1452px;top:598px;width:22px;height:20px;border:1px solid #000;border-radius:0 5px 5px 0;background:linear-gradient(#555555,#373737)"></div>
<div class="a t" style="left:1313.0px;width:300px;text-align:center;top:603.35px;font-size:11px;line-height:11px;color:#fff;">16</div>
<div class="a" style="left:1482px;top:598px;width:85px;height:20px;border:1px solid #000000;border-radius:5px;background:linear-gradient(#535353,#353535);"></div>
<div class="a t" style="left:1490px;top:603.35px;font-size:11px;line-height:11px;color:#fff;">Mitchell-Ne</div>
<svg class="a" style="left:1556px;top:601px;" width="8" height="14" viewBox="0 0 8 14"><path d="M0.5 6L4 1L7.5 6Z M0.5 8L4 13L7.5 8Z" fill="#9a9a9a"/></svg>
<div class="a" style="left:1393px;top:623px;width:14px;height:14px;border:1px solid #000000;border-radius:3px;background:linear-gradient(#555555,#373737);"></div>
<div class="a t" style="left:1415px;top:626.35px;font-size:11px;line-height:11px;color:#000;">Muestreo...</div>
<div class="a" style="left:1482px;top:620px;width:85px;height:20px;border:1px solid #191919;border-radius:10px;background:linear-gradient(#a0a0a0,#b4b4b4)"></div>
<svg class="a" style="left:1487px;top:625px;" width="6" height="10" viewBox="0 0 6 10"><path d="M5 1.5L1 5L5 8.5Z" fill="#8a8a8a"/></svg>
<svg class="a" style="left:1558px;top:625px;" width="6" height="10" viewBox="0 0 6 10"><path d="M1 1.5L5 5L1 8.5Z" fill="#8a8a8a"/></svg>
<div class="a t" style="left:1498px;top:626.35px;font-size:11px;line-height:11px;color:#000;">: 1.000 px</div>
<div class="a" style="left:1387px;top:648px;width:184px;height:1px;background:#555"></div>
<div class="a" style="left:1387px;top:649px;width:184px;height:1px;background:#7c7c7c"></div>
<svg class="a" style="left:1396px;top:653.5px;" width="8" height="10" viewBox="0 0 8 10"><path d="M0.5 0.5V9.5L7.5 5Z" fill="#111"/></svg>
<div class="a" style="left:1408px;top:652.5px;width:14px;height:14px;border:1px solid #000000;border-radius:3px;background:linear-gradient(#555555,#373737);"></div>
<div class="a t" style="left:1427px;top:654.00px;font-size:12px;line-height:12px;color:#000;">Desenfoque por movimien</div>
<svg class="a" style="left:1553px;top:656.5px;" width="12" height="6" viewBox="0 0 12 6"><rect x="1" y="1" width="1" height="1" fill="#fff"/><rect x="1" y="2" width="1" height="1" fill="#000"/><rect x="1" y="4" width="1" height="1" fill="#fff"/><rect x="1" y="5" width="1" height="1" fill="#000"/><rect x="4" y="1" width="1" height="1" fill="#fff"/><rect x="4" y="2" width="1" height="1" fill="#000"/><rect x="4" y="4" width="1" height="1" fill="#fff"/><rect x="4" y="5" width="1" height="1" fill="#000"/><rect x="7" y="1" width="1" height="1" fill="#fff"/><rect x="7" y="2" width="1" height="1" fill="#000"/><rect x="7" y="4" width="1" height="1" fill="#fff"/><rect x="7" y="5" width="1" height="1" fill="#000"/><rect x="10" y="1" width="1" height="1" fill="#fff"/><rect x="10" y="2" width="1" height="1" fill="#000"/><rect x="10" y="4" width="1" height="1" fill="#fff"/><rect x="10" y="5" width="1" height="1" fill="#000"/></svg>
<div class="a" style="left:1387px;top:672px;width:184px;height:1px;background:#555"></div>
<div class="a" style="left:1387px;top:673px;width:184px;height:1px;background:#7c7c7c"></div>
<svg class="a" style="left:1396px;top:677.5px;" width="8" height="10" viewBox="0 0 8 10"><path d="M0.5 0.5V9.5L7.5 5Z" fill="#111"/></svg>
<div class="a t" style="left:1407px;top:678.00px;font-size:12px;line-height:12px;color:#000;">Sombreado</div>
<svg class="a" style="left:1553px;top:680.5px;" width="12" height="6" viewBox="0 0 12 6"><rect x="1" y="1" width="1" height="1" fill="#fff"/><rect x="1" y="2" width="1" height="1" fill="#000"/><rect x="1" y="4" width="1" height="1" fill="#fff"/><rect x="1" y="5" width="1" height="1" fill="#000"/><rect x="4" y="1" width="1" height="1" fill="#fff"/><rect x="4" y="2" width="1" height="1" fill="#000"/><rect x="4" y="4" width="1" height="1" fill="#fff"/><rect x="4" y="5" width="1" height="1" fill="#000"/><rect x="7" y="1" width="1" height="1" fill="#fff"/><rect x="7" y="2" width="1" height="1" fill="#000"/><rect x="7" y="4" width="1" height="1" fill="#fff"/><rect x="7" y="5" width="1" height="1" fill="#000"/><rect x="10" y="1" width="1" height="1" fill="#fff"/><rect x="10" y="2" width="1" height="1" fill="#000"/><rect x="10" y="4" width="1" height="1" fill="#fff"/><rect x="10" y="5" width="1" height="1" fill="#000"/></svg>
<div class="a" style="left:1387px;top:696px;width:184px;height:1px;background:#555"></div>
<div class="a" style="left:1387px;top:697px;width:184px;height:1px;background:#7c7c7c"></div>
<svg class="a" style="left:1396px;top:701.5px;" width="8" height="10" viewBox="0 0 8 10"><path d="M0.5 0.5V9.5L7.5 5Z" fill="#111"/></svg>
<div class="a t" style="left:1407px;top:702.00px;font-size:12px;line-height:12px;color:#000;">Rendimiento</div>
<svg class="a" style="left:1553px;top:704.5px;" width="12" height="6" viewBox="0 0 12 6"><rect x="1" y="1" width="1" height="1" fill="#fff"/><rect x="1" y="2" width="1" height="1" fill="#000"/><rect x="1" y="4" width="1" height="1" fill="#fff"/><rect x="1" y="5" width="1" height="1" fill="#000"/><rect x="4" y="1" width="1" height="1" fill="#fff"/><rect x="4" y="2" width="1" height="1" fill="#000"/><rect x="4" y="4" width="1" height="1" fill="#fff"/><rect x="4" y="5" width="1" height="1" fill="#000"/><rect x="7" y="1" width="1" height="1" fill="#fff"/><rect x="7" y="2" width="1" height="1" fill="#000"/><rect x="7" y="4" width="1" height="1" fill="#fff"/><rect x="7" y="5" width="1" height="1" fill="#000"/><rect x="10" y="1" width="1" height="1" fill="#fff"/><rect x="10" y="2" width="1" height="1" fill="#000"/><rect x="10" y="4" width="1" height="1" fill="#fff"/><rect x="10" y="5" width="1" height="1" fill="#000"/></svg>
<div class="a" style="left:1387px;top:720px;width:184px;height:1px;background:#555"></div>
<div class="a" style="left:1387px;top:721px;width:184px;height:1px;background:#7c7c7c"></div>
<svg class="a" style="left:1396px;top:725.5px;" width="8" height="10" viewBox="0 0 8 10"><path d="M0.5 0.5V9.5L7.5 5Z" fill="#111"/></svg>
<div class="a t" style="left:1407px;top:726.00px;font-size:12px;line-height:12px;color:#000;">Pos procesamiento</div>
<svg class="a" style="left:1553px;top:728.5px;" width="12" height="6" viewBox="0 0 12 6"><rect x="1" y="1" width="1" height="1" fill="#fff"/><rect x="1" y="2" width="1" height="1" fill="#000"/><rect x="1" y="4" width="1" height="1" fill="#fff"/><rect x="1" y="5" width="1" height="1" fill="#000"/><rect x="4" y="1" width="1" height="1" fill="#fff"/><rect x="4" y="2" width="1" height="1" fill="#000"/><rect x="4" y="4" width="1" height="1" fill="#fff"/><rect x="4" y="5" width="1" height="1" fill="#000"/><rect x="7" y="1" width="1" height="1" fill="#fff"/><rect x="7" y="2" width="1" height="1" fill="#000"/><rect x="7" y="4" width="1" height="1" fill="#fff"/><rect x="7" y="5" width="1" height="1" fill="#000"/><rect x="10" y="1" width="1" height="1" fill="#fff"/><rect x="10" y="2" width="1" height="1" fill="#000"/><rect x="10" y="4" width="1" height="1" fill="#fff"/><rect x="10" y="5" width="1" height="1" fill="#000"/></svg>
<div class="a" style="left:1387px;top:744px;width:184px;height:1px;background:#555"></div>
<div class="a" style="left:1387px;top:745px;width:184px;height:1px;background:#7c7c7c"></div>
<svg class="a" style="left:1396px;top:749.5px;" width="8" height="10" viewBox="0 0 8 10"><path d="M0.5 0.5V9.5L7.5 5Z" fill="#111"/></svg>
<div class="a t" style="left:1407px;top:750.00px;font-size:12px;line-height:12px;color:#000;">Metadatos</div>
<svg class="a" style="left:1553px;top:752.5px;" width="12" height="6" viewBox="0 0 12 6"><rect x="1" y="1" width="1" height="1" fill="#fff"/><rect x="1" y="2" width="1" height="1" fill="#000"/><rect x="1" y="4" width="1" height="1" fill="#fff"/><rect x="1" y="5" width="1" height="1" fill="#000"/><rect x="4" y="1" width="1" height="1" fill="#fff"/><rect x="4" y="2" width="1" height="1" fill="#000"/><rect x="4" y="4" width="1" height="1" fill="#fff"/><rect x="4" y="5" width="1" height="1" fill="#000"/><rect x="7" y="1" width="1" height="1" fill="#fff"/><rect x="7" y="2" width="1" height="1" fill="#000"/><rect x="7" y="4" width="1" height="1" fill="#fff"/><rect x="7" y="5" width="1" height="1" fill="#000"/><rect x="10" y="1" width="1" height="1" fill="#fff"/><rect x="10" y="2" width="1" height="1" fill="#000"/><rect x="10" y="4" width="1" height="1" fill="#fff"/><rect x="10" y="5" width="1" height="1" fill="#000"/></svg>
<div class="a" style="left:1387px;top:768px;width:184px;height:1px;background:#555"></div>
<div class="a" style="left:1387px;top:769px;width:184px;height:1px;background:#7c7c7c"></div>
<svg class="a" style="left:1395px;top:774.5px;" width="10" height="8" viewBox="0 0 10 8"><path d="M0.5 0.5H9.5L5 7.5Z" fill="#111"/></svg>
<div class="a t" style="left:1407px;top:774.00px;font-size:12px;line-height:12px;color:#000;">Salida</div>
<svg class="a" style="left:1553px;top:776.5px;" width="12" height="6" viewBox="0 0 12 6"><rect x="1" y="1" width="1" height="1" fill="#fff"/><rect x="1" y="2" width="1" height="1" fill="#000"/><rect x="1" y="4" width="1" height="1" fill="#fff"/><rect x="1" y="5" width="1" height="1" fill="#000"/><rect x="4" y="1" width="1" height="1" fill="#fff"/><rect x="4" y="2" width="1" height="1" fill="#000"/><rect x="4" y="4" width="1" height="1" fill="#fff"/><rect x="4" y="5" width="1" height="1" fill="#000"/><rect x="7" y="1" width="1" height="1" fill="#fff"/><rect x="7" y="2" width="1" height="1" fill="#000"/><rect x="7" y="4" width="1" height="1" fill="#fff"/><rect x="7" y="5" width="1" height="1" fill="#000"/><rect x="10" y="1" width="1" height="1" fill="#fff"/><rect x="10" y="2" width="1" height="1" fill="#000"/><rect x="10" y="4" width="1" height="1" fill="#fff"/><rect x="10" y="5" width="1" height="1" fill="#000"/></svg>
<div class="a" style="left:1390px;top:800px;width:158px;height:20px;border:1px solid #191919;border-radius:5px 0 0 5px;background:linear-gradient(#999999,#b2b2b2)"></div>
<div class="a" style="left:1548px;top:800px;width:21px;height:20px;border:1px solid #191919;border-left:none;border-radius:0 5px 5px 0;background:linear-gradient(#a8a8a8,#8a8a8a)"></div>
<div class="a" style="left:1548px;top:800px;width:1px;height:20px;background:#191919"></div>
<div class="a t" style="left:1397px;top:805.35px;font-size:11px;line-height:11px;color:#000;">/tmp\</div>
<svg class="a" style="left:1550px;top:802px;" width="16" height="16" viewBox="0 0 16 16"><path d="M1.5 4.5H6L7 6H14.5V14.5H1.5Z" fill="#e8d890" stroke="#222" stroke-width="1"/><rect x="7" y="2" width="7" height="4" fill="#fff" stroke="#222" stroke-width="0.8"/></svg>
<div class="a" style="left:1393px;top:828px;width:14px;height:14px;border:1px solid #000000;border-radius:3px;background:linear-gradient(#555555,#373737);"></div>
<svg class="a" style="left:1394px;top:828px;" width="13" height="13" viewBox="0 0 13 13"><path d="M2.5 6.5L5.5 9.5L11 2.5" stroke="#fff" stroke-width="1.8" fill="none"/></svg>
<div class="a t" style="left:1415px;top:830.35px;font-size:11px;line-height:11px;color:#000;">Sobrescri...</div>
<div class="a" style="left:1485px;top:828px;width:14px;height:14px;border:1px solid #000000;border-radius:3px;background:linear-gradient(#555555,#373737);"></div>
<svg class="a" style="left:1486px;top:828px;" width="13" height="13" viewBox="0 0 13 13"><path d="M2.5 6.5L5.5 9.5L11 2.5" stroke="#fff" stroke-width="1.8" fill="none"/></svg>
<div class="a t" style="left:1507px;top:830.35px;font-size:11px;line-height:11px;color:#000;">Ext. de ar...</div>
<div class="a" style="left:1393px;top:849px;width:14px;height:3px;background:#464646;border-radius:3px 3px 0 0"></div>
<div class="a" style="left:1485px;top:849px;width:14px;height:3px;background:#464646;border-radius:3px 3px 0 0"></div>
<div class="a" style="left:0px;top:860px;width:1600px;height:40px;background:#4e2d3c"></div>
<div class="a" style="left:0px;top:860px;width:1600px;height:1px;background:#3e2430"></div>
<svg class="a" style="left:10px;top:865px;" width="30" height="28" viewBox="0 0 30 28"><path d="M1 4.5L12 3V13.5H1ZM13.5 2.8L28 1V13.5H13.5ZM1 15H12V25.5L1 24ZM13.5 15H28V27.5L13.5 25.7Z" fill="#fff"/></svg>
<svg class="a" style="left:49px;top:865px;" width="9" height="32" viewBox="0 0 9 32"><rect x="1" y="1" width="1.5" height="1.5" fill="#1e1018"/><rect x="1" y="4" width="1.5" height="1.5" fill="#1e1018"/><rect x="1" y="7" width="1.5" height="1.5" fill="#1e1018"/><rect x="1" y="10" width="1.5" height="1.5" fill="#1e1018"/><rect x="1" y="13" width="1.5" height="1.5" fill="#1e1018"/><rect x="1" y="16" width="1.5" height="1.5" fill="#1e1018"/><rect x="1" y="19" width="1.5" height="1.5" fill="#1e1018"/><rect x="1" y="22" width="1.5" height="1.5" fill="#1e1018"/><rect x="1" y="25" width="1.5" height="1.5" fill="#1e1018"/><rect x="1" y="28" width="1.5" height="1.5" fill="#1e1018"/><rect x="4" y="1" width="1.5" height="1.5" fill="#1e1018"/><rect x="4" y="4" width="1.5" height="1.5" fill="#1e1018"/><rect x="4" y="7" width="1.5" height="1.5" fill="#1e1018"/><rect x="4" y="10" width="1.5" height="1.5" fill="#1e1018"/><rect x="4" y="13" width="1.5" height="1.5" fill="#1e1018"/><rect x="4" y="16" width="1.5" height="1.5" fill="#1e1018"/><rect x="4" y="19" width="1.5" height="1.5" fill="#1e1018"/><rect x="4" y="22" width="1.5" height="1.5" fill="#1e1018"/><rect x="4" y="25" width="1.5" height="1.5" fill="#1e1018"/><rect x="4" y="28" width="1.5" height="1.5" fill="#1e1018"/><rect x="7" y="1" width="1.5" height="1.5" fill="#1e1018"/><rect x="7" y="4" width="1.5" height="1.5" fill="#1e1018"/><rect x="7" y="7" width="1.5" height="1.5" fill="#1e1018"/><rect x="7" y="10" width="1.5" height="1.5" fill="#1e1018"/><rect x="7" y="13" width="1.5" height="1.5" fill="#1e1018"/><rect x="7" y="16" width="1.5" height="1.5" fill="#1e1018"/><rect x="7" y="19" width="1.5" height="1.5" fill="#1e1018"/><rect x="7" y="22" width="1.5" height="1.5" fill="#1e1018"/><rect x="7" y="25" width="1.5" height="1.5" fill="#1e1018"/><rect x="7" y="28" width="1.5" height="1.5" fill="#1e1018"/></svg>
<svg class="a" style="left:82px;top:865px;" width="30" height="30" viewBox="0 0 30 30"><rect width="30" height="30" fill="#12a5e8"/><circle cx="15" cy="15" r="11" fill="#fff"/><circle cx="15" cy="15" r="9.5" fill="#12a5e8"/><text x="15" y="21.5" text-anchor="middle" font-family="Liberation Sans" font-weight="bold" font-size="17" fill="#fff">S</text></svg>
<svg class="a" style="left:143px;top:864px;" width="32" height="32" viewBox="0 0 32 32"><circle cx="16" cy="16" r="15" fill="#db3a2e"/><path d="M16 16L3 23.5A15 15 0 0 0 23.5 29Z" fill="#2ea34a"/><path d="M16 16L23.5 29A15 15 0 0 0 29 9.5L16 9.5Z" fill="#f7c92f"/><path d="M16 16L3 23.5A15 15 0 0 1 3 8.5Z" fill="#2ea34a"/><circle cx="16" cy="16" r="7" fill="#fff"/><circle cx="16" cy="16" r="5.5" fill="#4c8bf0"/></svg>
<svg class="a" style="left:203px;top:864px;" width="34" height="32" viewBox="0 0 34 32"><path d="M3 18Q2 8 14 7Q28 6 28 15Q28 20 22 20Q18 20 19 24Q20 29 12 28Q3 27 3 18Z" fill="#cfdcec" stroke="#7a8aa0" stroke-width="1"/><circle cx="9" cy="17" r="2.3" fill="#e03030"/><circle cx="12" cy="11.5" r="2.3" fill="#30a030"/><circle cx="18" cy="10.5" r="2.3" fill="#e0a020"/><circle cx="13" cy="22" r="2.3" fill="#3050d0"/><path d="M17 28L30 4" stroke="#d08030" stroke-width="2.6"/><path d="M27 9L31 2" stroke="#eee" stroke-width="2.6"/></svg>
<div class="a" style="left:254px;top:861px;width:58px;height:38px;background:#6e5262;border:1px solid #9b7d8d"></div>
<div class="a" style="left:316px;top:861px;width:58px;height:38px;background:#6e5262;border:1px solid #9b7d8d"></div>
<div class="a" style="left:378px;top:861px;width:58px;height:38px;background:#6e5262;border:1px solid #9b7d8d"></div>
<svg class="a" style="left:266px;top:863px;" width="34" height="34" viewBox="0 0 34 34"><circle cx="16" cy="16" r="11" fill="#12a5e8"/><circle cx="9" cy="8" r="6" fill="#12a5e8"/><circle cx="23" cy="24" r="6" fill="#12a5e8"/><text x="16" y="22.5" text-anchor="middle" font-family="Liberation Sans" font-weight="bold" font-size="18" fill="#fff">S</text><circle cx="25" cy="26" r="5.3" fill="#fff" stroke="#6ab020" stroke-width="1.6"/></svg>
<svg class="a" style="left:330px;top:864px;" width="30" height="32" viewBox="0 0 30 32"><path d="M10 6L22 9V28L10 25Z" fill="#e8d47a" stroke="#b8a040" stroke-width="0.8"/><path d="M7 3L16 8V31L7 26Z" fill="#f5e8a8" stroke="#c0a848" stroke-width="0.8"/><path d="M22 20L26 22V29L22 28Z" fill="#e8d47a"/></svg>
<svg class="a" style="left:391px;top:865px;" width="34" height="29" viewBox="0 0 34 29"><g transform="scale(1.0) translate(-6,-3)"><path d="M21.6 4.8L33 12" stroke="#f5841f" stroke-width="3.6" stroke-linecap="round"/><path d="M11.6 11.4H24" stroke="#f5841f" stroke-width="3.4" stroke-linecap="round"/><path d="M7.2 23.2L18 15.5" stroke="#f5841f" stroke-width="4" stroke-linecap="round"/><circle cx="26.4" cy="18.8" r="10.8" fill="#f5841f"/><circle cx="26.4" cy="18.6" r="6.5" fill="#fff"/><circle cx="26.2" cy="18.4" r="4.1" fill="#0a4a96"/></g></svg>
<svg class="a" style="left:784px;top:865px;" width="9" height="32" viewBox="0 0 9 32"><rect x="1" y="1" width="1.5" height="1.5" fill="#1e1018"/><rect x="1" y="4" width="1.5" height="1.5" fill="#1e1018"/><rect x="1" y="7" width="1.5" height="1.5" fill="#1e1018"/><rect x="1" y="10" width="1.5" height="1.5" fill="#1e1018"/><rect x="1" y="13" width="1.5" height="1.5" fill="#1e1018"/><rect x="1" y="16" width="1.5" height="1.5" fill="#1e1018"/><rect x="1" y="19" width="1.5" height="1.5" fill="#1e1018"/><rect x="1" y="22" width="1.5" height="1.5" fill="#1e1018"/><rect x="1" y="25" width="1.5" height="1.5" fill="#1e1018"/><rect x="1" y="28" width="1.5" height="1.5" fill="#1e1018"/><rect x="4" y="1" width="1.5" height="1.5" fill="#1e1018"/><rect x="4" y="4" width="1.5" height="1.5" fill="#1e1018"/><rect x="4" y="7" width="1.5" height="1.5" fill="#1e1018"/><rect x="4" y="10" width="1.5" height="1.5" fill="#1e1018"/><rect x="4" y="13" width="1.5" height="1.5" fill="#1e1018"/><rect x="4" y="16" width="1.5" height="1.5" fill="#1e1018"/><rect x="4" y="19" width="1.5" height="1.5" fill="#1e1018"/><rect x="4" y="22" width="1.5" height="1.5" fill="#1e1018"/><rect x="4" y="25" width="1.5" height="1.5" fill="#1e1018"/><rect x="4" y="28" width="1.5" height="1.5" fill="#1e1018"/><rect x="7" y="1" width="1.5" height="1.5" fill="#1e1018"/><rect x="7" y="4" width="1.5" height="1.5" fill="#1e1018"/><rect x="7" y="7" width="1.5" height="1.5" fill="#1e1018"/><rect x="7" y="10" width="1.5" height="1.5" fill="#1e1018"/><rect x="7" y="13" width="1.5" height="1.5" fill="#1e1018"/><rect x="7" y="16" width="1.5" height="1.5" fill="#1e1018"/><rect x="7" y="19" width="1.5" height="1.5" fill="#1e1018"/><rect x="7" y="22" width="1.5" height="1.5" fill="#1e1018"/><rect x="7" y="25" width="1.5" height="1.5" fill="#1e1018"/><rect x="7" y="28" width="1.5" height="1.5" fill="#1e1018"/></svg>
<div class="a t" style="left:799px;top:875.00px;font-size:12px;line-height:12px;color:#fff;">Dirección</div>
<div class="a" style="left:855px;top:871px;width:231px;height:20px;background:#fff;border:1px solid #d0c8cc"></div>
<svg class="a" style="left:1045px;top:876px;" width="12" height="10" viewBox="0 0 12 10"><path d="M2 3L6 7L10 3" stroke="#444" stroke-width="1.6" fill="none"/></svg>
<div class="a" style="left:1060px;top:872px;width:1px;height:18px;background:#ddd"></div>
<svg class="a" style="left:1064px;top:873px;" width="16" height="16" viewBox="0 0 16 16"><path d="M12 8A4.5 4.5 0 1 1 8 3.5" stroke="#888" stroke-width="1.7" fill="none"/><path d="M7 1L10.5 3.6L7 6.2Z" fill="#888"/></svg>
<svg class="a" style="left:1092px;top:872px;" width="18" height="18" viewBox="0 0 18 18"><rect x="1" y="2" width="14" height="14" fill="#e0b030"/><rect x="1" y="2" width="7" height="7" fill="#e05030"/><rect x="8" y="2" width="7" height="7" fill="#3080d0"/><rect x="1" y="9" width="7" height="7" fill="#40a040"/><rect x="8" y="9" width="7" height="7" fill="#e04030"/></svg>
<svg class="a" style="left:1116px;top:872px;" width="18" height="18" viewBox="0 0 18 18"><rect x="1" y="1" width="15" height="15" rx="1" fill="#c01818"/><path d="M4 12L8 8L12 4M8 8L12 12" stroke="#fff" stroke-width="1.3"/></svg>
<svg class="a" style="left:1140px;top:872px;" width="18" height="18" viewBox="0 0 18 18"><path d="M3 9A4 3.5 0 0 1 9 6M14 9A4 3.5 0 0 1 8 12M9 6A4 3.5 0 1 1 8 12M8 12A4 3.5 0 1 1 9 6" stroke="#fff" stroke-width="1.7" fill="none"/></svg>
<svg class="a" style="left:1163px;top:872px;" width="18" height="18" viewBox="0 0 18 18"><path d="M2 6H5L9 2V15L5 11H2Z" fill="#eee"/><circle cx="13" cy="12" r="4" fill="#e01818"/><path d="M10.5 14.5L15.5 9.5" stroke="#fff" stroke-width="1.3"/></svg>
<svg class="a" style="left:1187px;top:872px;" width="18" height="18" viewBox="0 0 18 18"><rect x="3" y="1" width="6" height="13" fill="#999"/><circle cx="12" cy="12" r="4.5" fill="#20a020"/><path d="M10 12L11.5 13.5L14 10.5" stroke="#fff" stroke-width="1.3" fill="none"/></svg>
<svg class="a" style="left:1212px;top:872px;" width="18" height="18" viewBox="0 0 18 18"><rect x="2" y="2" width="13" height="10" fill="#888" stroke="#111" stroke-width="1"/><rect x="2" y="13" width="4" height="2" fill="#ddd"/><rect x="10" y="13" width="4" height="2" fill="#ddd"/></svg>
<svg class="a" style="left:1236px;top:872px;" width="18" height="18" viewBox="0 0 18 18"><path d="M3 4Q9 0 14 4Q17 9 13 14Q8 17 4 13Q0 9 3 4Z" fill="#eef0d0" stroke="#8ac030" stroke-width="1.3"/></svg>
<svg class="a" style="left:1260px;top:872px;" width="18" height="18" viewBox="0 0 18 18"><ellipse cx="8.5" cy="9" rx="6" ry="8" fill="#14305a"/><path d="M6 5L11 10L8.5 12.5V5.5L11 8L6 12" stroke="#fff" stroke-width="1.1" fill="none"/></svg>
<svg class="a" style="left:1284px;top:872px;" width="18" height="18" viewBox="0 0 18 18"><rect x="1" y="1" width="15" height="15" rx="2" fill="#e87818"/><path d="M4 12H13M5 10L11 4" stroke="#fff" stroke-width="1.3"/></svg>
<svg class="a" style="left:1308px;top:872px;" width="18" height="18" viewBox="0 0 18 18"><path d="M3 1V16" stroke="#eee" stroke-width="1.4"/><path d="M4 2H11V8H4Z" fill="#eee"/><circle cx="12" cy="12" r="4" fill="#e01818"/><path d="M10 10L14 14M14 10L10 14" stroke="#fff" stroke-width="1.2"/></svg>
<svg class="a" style="left:1334px;top:872px;" width="18" height="18" viewBox="0 0 18 18"><rect x="5" y="3" width="7" height="12" fill="none" stroke="#fff" stroke-width="1.6"/><rect x="7" y="1.5" width="3" height="2" fill="#fff"/><rect x="7" y="6" width="3" height="7" fill="#fff"/></svg>
<svg class="a" style="left:1357px;top:872px;" width="18" height="18" viewBox="0 0 18 18"><rect x="1" y="3" width="15" height="9" fill="#ddd"/><rect x="3" y="5" width="11" height="5" fill="#e8a030"/><rect x="0" y="13" width="17" height="2" fill="#ccc"/></svg>
<svg class="a" style="left:1381px;top:872px;" width="18" height="18" viewBox="0 0 18 18"><path d="M2 8L10 3L15 7L7 13Z" fill="#444" stroke="#ddd" stroke-width="0.8"/><rect x="2" y="10" width="5" height="5" fill="#b060d0"/></svg>
<svg class="a" style="left:1405px;top:872px;" width="18" height="18" viewBox="0 0 18 18"><path d="M3 7L8.5 2L14 7V15H3Z" fill="none" stroke="#bbb" stroke-width="1.4"/><path d="M8.5 5V13" stroke="#bbb" stroke-width="1.4"/></svg>
<svg class="a" style="left:1429px;top:872px;" width="18" height="18" viewBox="0 0 18 18"><rect x="1" y="3" width="15" height="12" fill="#fff"/><rect x="3" y="9" width="11" height="4" fill="#222"/><rect x="3" y="5" width="5" height="3" fill="#222"/><rect x="9" y="5" width="5" height="3" fill="#222"/></svg>
<svg class="a" style="left:1453px;top:872px;" width="18" height="18" viewBox="0 0 18 18"><rect x="1" y="12" width="2" height="3" fill="#fff"/><rect x="4.5" y="10" width="2" height="5" fill="#fff"/><rect x="8" y="7" width="2" height="8" fill="#fff"/><rect x="11.5" y="4" width="2" height="11" fill="#fff"/><rect x="15" y="1" width="2" height="14" fill="#fff"/></svg>
<div class="a t" style="left:1484px;top:875.00px;font-size:12px;line-height:12px;color:#fff;">ESP</div>
<div class="a t" style="left:1525px;top:868.34px;font-size:11.6px;line-height:11.6px;color:#fff;">04:17 p.m.</div>
<div class="a t" style="left:1523px;top:884.34px;font-size:11.6px;line-height:11.6px;color:#fff;">23/06/2017</div>
<svg class="a" style="left:1100px;top:860px;" width="500" height="40" viewBox="0 0 500 40"><path d="M230 0H500V22Q400 8 300 14Z" fill="rgba(255,255,255,0.035)"/></svg>
<svg class="a" style="left:8px;top:45px;opacity:0.85" width="12" height="12" viewBox="0 0 12 12"><path d="M0.5 0.5L11.5 11.5" stroke="#fff" stroke-width="1"/><path d="M0.5 1.5L10.5 11.5" stroke="#000" stroke-width="1"/><path d="M0.5 4.5L7.5 11.5" stroke="#fff" stroke-width="1"/><path d="M0.5 5.5L6.5 11.5" stroke="#000" stroke-width="1"/><path d="M0.5 8.5L3.5 11.5" stroke="#fff" stroke-width="1"/><path d="M0.5 9.5L2.5 11.5" stroke="#000" stroke-width="1"/></svg>
<svg class="a" style="left:1580px;top:31px;opacity:0.85" width="12" height="12" viewBox="0 0 12 12"><path d="M0.5 0.5L11.5 11.5" stroke="#fff" stroke-width="1"/><path d="M1.5 0.5L11.5 10.5" stroke="#000" stroke-width="1"/><path d="M4.5 0.5L11.5 7.5" stroke="#fff" stroke-width="1"/><path d="M5.5 0.5L11.5 6.5" stroke="#000" stroke-width="1"/><path d="M8.5 0.5L11.5 3.5" stroke="#fff" stroke-width="1"/><path d="M9.5 0.5L11.5 2.5" stroke="#000" stroke-width="1"/></svg>
<svg class="a" style="left:1369px;top:58px;opacity:0.85" width="12" height="12" viewBox="0 0 12 12"><path d="M0.5 0.5L11.5 11.5" stroke="#fff" stroke-width="1"/><path d="M1.5 0.5L11.5 10.5" stroke="#000" stroke-width="1"/><path d="M4.5 0.5L11.5 7.5" stroke="#fff" stroke-width="1"/><path d="M5.5 0.5L11.5 6.5" stroke="#000" stroke-width="1"/><path d="M8.5 0.5L11.5 3.5" stroke="#fff" stroke-width="1"/><path d="M9.5 0.5L11.5 2.5" stroke="#000" stroke-width="1"/></svg>
<svg class="a" style="left:1580px;top:58px;opacity:0.85" width="12" height="12" viewBox="0 0 12 12"><path d="M0.5 0.5L11.5 11.5" stroke="#fff" stroke-width="1"/><path d="M1.5 0.5L11.5 10.5" stroke="#000" stroke-width="1"/><path d="M4.5 0.5L11.5 7.5" stroke="#fff" stroke-width="1"/><path d="M5.5 0.5L11.5 6.5" stroke="#000" stroke-width="1"/><path d="M8.5 0.5L11.5 3.5" stroke="#fff" stroke-width="1"/><path d="M9.5 0.5L11.5 2.5" stroke="#000" stroke-width="1"/></svg>
<svg class="a" style="left:1382px;top:179px;opacity:0.85" width="12" height="12" viewBox="0 0 12 12"><path d="M0.5 0.5L11.5 11.5" stroke="#fff" stroke-width="1"/><path d="M0.5 1.5L10.5 11.5" stroke="#000" stroke-width="1"/><path d="M0.5 4.5L7.5 11.5" stroke="#fff" stroke-width="1"/><path d="M0.5 5.5L6.5 11.5" stroke="#000" stroke-width="1"/><path d="M0.5 8.5L3.5 11.5" stroke="#fff" stroke-width="1"/><path d="M0.5 9.5L2.5 11.5" stroke="#000" stroke-width="1"/></svg>
<svg class="a" style="left:1580px;top:192px;opacity:0.85" width="12" height="12" viewBox="0 0 12 12"><path d="M0.5 0.5L11.5 11.5" stroke="#fff" stroke-width="1"/><path d="M1.5 0.5L11.5 10.5" stroke="#000" stroke-width="1"/><path d="M4.5 0.5L11.5 7.5" stroke="#fff" stroke-width="1"/><path d="M5.5 0.5L11.5 6.5" stroke="#000" stroke-width="1"/><path d="M8.5 0.5L11.5 3.5" stroke="#fff" stroke-width="1"/><path d="M9.5 0.5L11.5 2.5" stroke="#000" stroke-width="1"/></svg>
<svg class="a" style="left:1382px;top:840px;opacity:0.85" width="12" height="12" viewBox="0 0 12 12"><path d="M0.5 0.5L11.5 11.5" stroke="#fff" stroke-width="1"/><path d="M0.5 1.5L10.5 11.5" stroke="#000" stroke-width="1"/><path d="M0.5 4.5L7.5 11.5" stroke="#fff" stroke-width="1"/><path d="M0.5 5.5L6.5 11.5" stroke="#000" stroke-width="1"/><path d="M0.5 8.5L3.5 11.5" stroke="#fff" stroke-width="1"/><path d="M0.5 9.5L2.5 11.5" stroke="#000" stroke-width="1"/></svg>
<svg class="a" style="left:8px;top:764px;opacity:0.85" width="12" height="12" viewBox="0 0 12 12"><path d="M0.5 0.5L11.5 11.5" stroke="#fff" stroke-width="1"/><path d="M0.5 1.5L10.5 11.5" stroke="#000" stroke-width="1"/><path d="M0.5 4.5L7.5 11.5" stroke="#fff" stroke-width="1"/><path d="M0.5 5.5L6.5 11.5" stroke="#000" stroke-width="1"/><path d="M0.5 8.5L3.5 11.5" stroke="#fff" stroke-width="1"/><path d="M0.5 9.5L2.5 11.5" stroke="#000" stroke-width="1"/></svg>
<svg class="a" style="left:1369px;top:777px;opacity:0.85" width="12" height="12" viewBox="0 0 12 12"><path d="M0.5 0.5L11.5 11.5" stroke="#fff" stroke-width="1"/><path d="M1.5 0.5L11.5 10.5" stroke="#000" stroke-width="1"/><path d="M4.5 0.5L11.5 7.5" stroke="#fff" stroke-width="1"/><path d="M5.5 0.5L11.5 6.5" stroke="#000" stroke-width="1"/><path d="M8.5 0.5L11.5 3.5" stroke="#fff" stroke-width="1"/><path d="M9.5 0.5L11.5 2.5" stroke="#000" stroke-width="1"/></svg>
<svg class="a" style="left:8px;top:840px;opacity:0.85" width="12" height="12" viewBox="0 0 12 12"><path d="M0.5 0.5L11.5 11.5" stroke="#fff" stroke-width="1"/><path d="M0.5 1.5L10.5 11.5" stroke="#000" stroke-width="1"/><path d="M0.5 4.5L7.5 11.5" stroke="#fff" stroke-width="1"/><path d="M0.5 5.5L6.5 11.5" stroke="#000" stroke-width="1"/><path d="M0.5 8.5L3.5 11.5" stroke="#fff" stroke-width="1"/><path d="M0.5 9.5L2.5 11.5" stroke="#000" stroke-width="1"/></svg>
<div class="a" style="left:1381px;top:58px;width:1px;height:794px;background:#000"></div>
<div class="a" style="left:1382px;top:58px;width:1px;height:133px;background:#7a7a7a"></div>
<div class="a" style="left:1382px;top:192px;width:1px;height:660px;background:#7a7a7a"></div>
</body></html>
